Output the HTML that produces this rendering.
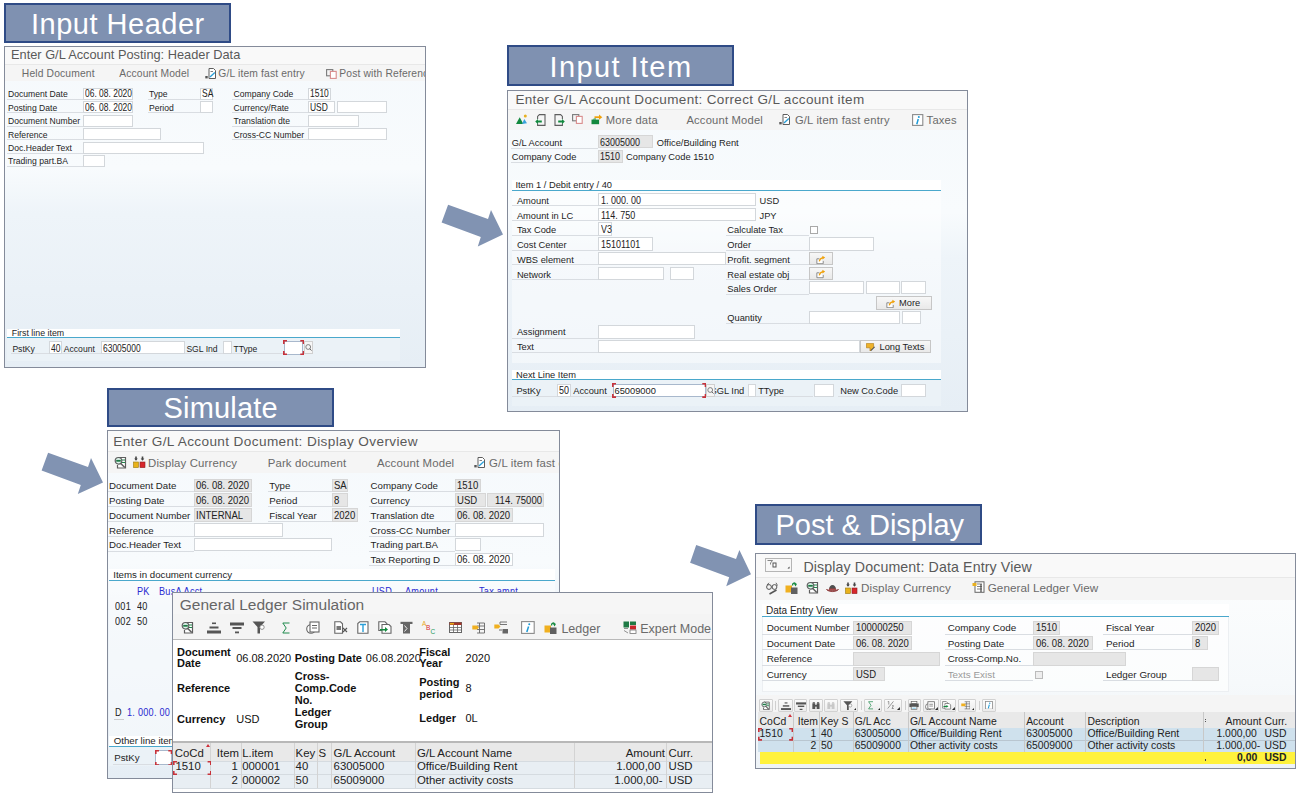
<!DOCTYPE html>
<html><head><meta charset="utf-8"><title>SAP G/L posting flow</title>
<style>
html,body{margin:0;padding:0;background:#fff}
#root{position:relative;width:1310px;height:799px;overflow:hidden;background:#fff;font-family:"Liberation Sans",sans-serif}
#root div{position:absolute;line-height:normal}
#root svg{position:absolute}
</style></head><body><div id="root">
<div style="left:4.0px;top:3.0px;width:227.0px;height:40.0px;background:#7f91b1;border:2px solid #2f4b86;box-sizing:border-box"></div>
<div style="left:31.0px;top:8.0px;font-size:29px;color:#fff;font-weight:400;font-family:'Liberation Sans';white-space:pre;letter-spacing:0.5px">Input Header</div>
<div style="left:507.0px;top:45.0px;width:227.0px;height:41.0px;background:#7f91b1;border:2px solid #2f4b86;box-sizing:border-box"></div>
<div style="left:549.5px;top:50.6px;font-size:29px;color:#fff;font-weight:400;font-family:'Liberation Sans';white-space:pre;letter-spacing:1.4px">Input Item</div>
<div style="left:107.0px;top:388.0px;width:227.0px;height:39.0px;background:#7f91b1;border:2px solid #2f4b86;box-sizing:border-box"></div>
<div style="left:163.5px;top:392.0px;font-size:29px;color:#fff;font-weight:400;font-family:'Liberation Sans';white-space:pre;letter-spacing:0.2px">Simulate</div>
<div style="left:755.0px;top:504.0px;width:227.0px;height:41.0px;background:#7f91b1;border:2px solid #2f4b86;box-sizing:border-box"></div>
<div style="left:775.5px;top:508.6px;font-size:29px;color:#fff;font-weight:400;font-family:'Liberation Sans';white-space:pre;letter-spacing:0px">Post &amp; Display</div>
<div style="left:4.0px;top:46.0px;width:422.0px;height:322.0px;overflow:hidden;border:1px solid #848b9a;box-sizing:border-box;background:linear-gradient(180deg,#f5f9fc 0%,#f8fbfd 38%,#eef4f9 52%,#e6eef5 100%)">
<div style="left:-1.0px;top:-1.0px;width:422.0px;height:19.0px;background:#f9f9f9;border-bottom:1px solid #e8e8e8;box-sizing:border-box"></div>
<div style="left:-1.0px;top:18.0px;width:422.0px;height:16.0px;background:#f5f5f5"></div>
<div style="left:6.0px;top:0.3px;font-size:12.8px;color:#595959;font-weight:400;font-family:'Liberation Sans';white-space:pre;">Enter G/L Account Posting: Header Data</div>
<div style="left:16.8px;top:21.3px;font-size:10.3px;color:#6a6a6a;font-weight:400;font-family:'Liberation Sans';white-space:pre;letter-spacing:0.15px">Held Document</div>
<div style="left:114.2px;top:21.3px;font-size:10.3px;color:#6a6a6a;font-weight:400;font-family:'Liberation Sans';white-space:pre;letter-spacing:0.15px">Account Model</div>
<div style="left:213.3px;top:21.3px;font-size:10.3px;color:#6a6a6a;font-weight:400;font-family:'Liberation Sans';white-space:pre;letter-spacing:0.15px">G/L item fast entry</div>
<div style="left:334.3px;top:21.3px;font-size:10.3px;color:#6a6a6a;font-weight:400;font-family:'Liberation Sans';white-space:pre;letter-spacing:0.15px">Post with Reference</div>
<div style="left:2.0px;top:52.0px;width:75.6px;height:1.0px;background:#d9dde2"></div>
<div style="left:3.0px;top:42.2px;font-size:8.6px;color:#1e1e1e;font-weight:400;font-family:'Liberation Sans';white-space:pre;">Document Date</div>
<div style="left:77.6px;top:41.0px;width:50.9px;height:12.0px;background:#fff;border:1px solid #d3d7db;box-sizing:border-box"></div>
<div style="left:79.5px;top:41.2px;font-size:10.2px;color:#222;font-weight:400;font-family:'Liberation Sans';white-space:pre;transform:scaleX(0.83);transform-origin:0 0">06. 08. 2020</div>
<div style="left:2.0px;top:65.4px;width:75.6px;height:1.0px;background:#d9dde2"></div>
<div style="left:3.0px;top:55.6px;font-size:8.6px;color:#1e1e1e;font-weight:400;font-family:'Liberation Sans';white-space:pre;">Posting Date</div>
<div style="left:77.6px;top:54.4px;width:50.9px;height:12.0px;background:#fff;border:1px solid #d3d7db;box-sizing:border-box"></div>
<div style="left:79.5px;top:54.6px;font-size:10.2px;color:#222;font-weight:400;font-family:'Liberation Sans';white-space:pre;transform:scaleX(0.83);transform-origin:0 0">06. 08. 2020</div>
<div style="left:2.0px;top:78.9px;width:75.6px;height:1.0px;background:#d9dde2"></div>
<div style="left:3.0px;top:69.1px;font-size:8.6px;color:#1e1e1e;font-weight:400;font-family:'Liberation Sans';white-space:pre;">Document Number</div>
<div style="left:77.6px;top:67.9px;width:50.9px;height:12.0px;background:#fff;border:1px solid #d3d7db;box-sizing:border-box"></div>
<div style="left:2.0px;top:92.3px;width:75.6px;height:1.0px;background:#d9dde2"></div>
<div style="left:3.0px;top:82.5px;font-size:8.6px;color:#1e1e1e;font-weight:400;font-family:'Liberation Sans';white-space:pre;">Reference</div>
<div style="left:77.6px;top:81.3px;width:78.6px;height:12.0px;background:#fff;border:1px solid #d3d7db;box-sizing:border-box"></div>
<div style="left:2.0px;top:105.7px;width:75.6px;height:1.0px;background:#d9dde2"></div>
<div style="left:3.0px;top:95.9px;font-size:8.6px;color:#1e1e1e;font-weight:400;font-family:'Liberation Sans';white-space:pre;">Doc.Header Text</div>
<div style="left:77.6px;top:94.7px;width:121.1px;height:12.0px;background:#fff;border:1px solid #d3d7db;box-sizing:border-box"></div>
<div style="left:2.0px;top:119.2px;width:75.6px;height:1.0px;background:#d9dde2"></div>
<div style="left:3.0px;top:109.3px;font-size:8.6px;color:#1e1e1e;font-weight:400;font-family:'Liberation Sans';white-space:pre;">Trading part.BA</div>
<div style="left:77.6px;top:108.2px;width:22.7px;height:12.0px;background:#fff;border:1px solid #d3d7db;box-sizing:border-box"></div>
<div style="left:143.0px;top:52.0px;width:52.0px;height:1.0px;background:#d9dde2"></div>
<div style="left:144.0px;top:42.2px;font-size:8.6px;color:#1e1e1e;font-weight:400;font-family:'Liberation Sans';white-space:pre;">Type</div>
<div style="left:195.0px;top:41.0px;width:13.3px;height:12.0px;background:#fff;border:1px solid #d3d7db;box-sizing:border-box"></div>
<div style="left:196.5px;top:41.2px;font-size:10.2px;color:#222;font-weight:400;font-family:'Liberation Sans';white-space:pre;transform:scaleX(0.83);transform-origin:0 0">SA</div>
<div style="left:143.0px;top:65.4px;width:52.0px;height:1.0px;background:#d9dde2"></div>
<div style="left:144.0px;top:55.6px;font-size:8.6px;color:#1e1e1e;font-weight:400;font-family:'Liberation Sans';white-space:pre;">Period</div>
<div style="left:195.0px;top:54.4px;width:13.3px;height:12.0px;background:#fff;border:1px solid #d3d7db;box-sizing:border-box"></div>
<div style="left:227.2px;top:52.0px;width:75.8px;height:1.0px;background:#d9dde2"></div>
<div style="left:228.5px;top:42.2px;font-size:8.6px;color:#1e1e1e;font-weight:400;font-family:'Liberation Sans';white-space:pre;">Company Code</div>
<div style="left:303.0px;top:41.0px;width:22.5px;height:12.0px;background:#fff;border:1px solid #d3d7db;box-sizing:border-box"></div>
<div style="left:304.5px;top:41.2px;font-size:10.2px;color:#222;font-weight:400;font-family:'Liberation Sans';white-space:pre;transform:scaleX(0.83);transform-origin:0 0">1510</div>
<div style="left:227.2px;top:65.4px;width:75.8px;height:1.0px;background:#d9dde2"></div>
<div style="left:228.5px;top:55.6px;font-size:8.6px;color:#1e1e1e;font-weight:400;font-family:'Liberation Sans';white-space:pre;">Currency/Rate</div>
<div style="left:303.0px;top:54.4px;width:27.2px;height:12.0px;background:#fff;border:1px solid #d3d7db;box-sizing:border-box"></div>
<div style="left:304.5px;top:54.6px;font-size:10.2px;color:#222;font-weight:400;font-family:'Liberation Sans';white-space:pre;transform:scaleX(0.83);transform-origin:0 0">USD</div>
<div style="left:227.2px;top:78.9px;width:75.8px;height:1.0px;background:#d9dde2"></div>
<div style="left:228.5px;top:69.1px;font-size:8.6px;color:#1e1e1e;font-weight:400;font-family:'Liberation Sans';white-space:pre;">Translation dte</div>
<div style="left:303.0px;top:67.9px;width:51.0px;height:12.0px;background:#fff;border:1px solid #d3d7db;box-sizing:border-box"></div>
<div style="left:227.2px;top:92.3px;width:75.8px;height:1.0px;background:#d9dde2"></div>
<div style="left:228.5px;top:82.5px;font-size:8.6px;color:#1e1e1e;font-weight:400;font-family:'Liberation Sans';white-space:pre;">Cross-CC Number</div>
<div style="left:303.0px;top:81.3px;width:79.2px;height:12.0px;background:#fff;border:1px solid #d3d7db;box-sizing:border-box"></div>
<div style="left:331.5px;top:54.4px;width:50.7px;height:12.0px;background:#fff;border:1px solid #d3d7db;box-sizing:border-box"></div>
<div style="left:2.4px;top:290.9px;width:393.0px;height:23.5px;background:rgba(235,242,247,0.9)"></div>
<div style="left:2.4px;top:281.8px;width:393.0px;height:9.1px;background:#fff"></div>
<div style="left:2.4px;top:290.4px;width:393.0px;height:1.0px;background:#4aa8cc"></div>
<div style="left:6.8px;top:281.2px;font-size:8.8px;color:#1e1e1e;font-weight:400;font-family:'Liberation Sans';white-space:pre;">First line item</div>
<div style="left:6.0px;top:306.0px;width:38.4px;height:1.0px;background:#d9dde2"></div>
<div style="left:7.4px;top:296.5px;font-size:8.6px;color:#1e1e1e;font-weight:400;font-family:'Liberation Sans';white-space:pre;">PstKy</div>
<div style="left:44.4px;top:294.2px;width:12.7px;height:12.8px;background:#fff;border:1px solid #d3d7db;box-sizing:border-box"></div>
<div style="left:46.0px;top:295.5px;font-size:10.2px;color:#222;font-weight:400;font-family:'Liberation Sans';white-space:pre;transform:scaleX(0.83);transform-origin:0 0">40</div>
<div style="left:57.1px;top:306.0px;width:39.3px;height:1.0px;background:#d9dde2"></div>
<div style="left:58.8px;top:296.5px;font-size:8.6px;color:#1e1e1e;font-weight:400;font-family:'Liberation Sans';white-space:pre;">Account</div>
<div style="left:96.4px;top:294.2px;width:83.3px;height:12.8px;background:#fff;border:1px solid #d3d7db;box-sizing:border-box"></div>
<div style="left:98.0px;top:295.5px;font-size:10.2px;color:#222;font-weight:400;font-family:'Liberation Sans';white-space:pre;transform:scaleX(0.83);transform-origin:0 0">63005000</div>
<div style="left:179.7px;top:306.0px;width:38.7px;height:1.0px;background:#d9dde2"></div>
<div style="left:181.4px;top:296.5px;font-size:8.6px;color:#1e1e1e;font-weight:400;font-family:'Liberation Sans';white-space:pre;">SGL Ind</div>
<div style="left:218.4px;top:294.2px;width:8.4px;height:12.8px;background:#fff;border:1px solid #d3d7db;box-sizing:border-box"></div>
<div style="left:226.8px;top:306.0px;width:52.0px;height:1.0px;background:#d9dde2"></div>
<div style="left:228.5px;top:296.5px;font-size:8.6px;color:#1e1e1e;font-weight:400;font-family:'Liberation Sans';white-space:pre;">TType</div>
<div style="left:278.8px;top:294.2px;width:19.5px;height:12.8px;background:#fff;border:1px solid #d3d7db;box-sizing:border-box"></div>
<svg style="position:absolute;left:199.6px;top:21.0px" width="12.0" height="11.0" viewBox="0 0 12 11"><path d="M4 0.5H8.5L10.5 2.5V10.5H4Z" fill="#fff" stroke="#5e5e5e" stroke-width="1"/><path d="M5.5 3.5h2.5" stroke="#5e5e5e" stroke-width="0.8"/><path d="M5 9 L9.8 4.5" stroke="#2a9fd8" stroke-width="1.3"/><rect x="0.3" y="8" width="2.4" height="2.4" fill="#555"/></svg>
<svg style="position:absolute;left:321.0px;top:22.0px" width="11.0" height="10.0" viewBox="0 0 11 10"><rect x="0.6" y="0.6" width="6.2" height="6.2" fill="none" stroke="#7a7a7a" stroke-width="1.1"/><rect x="4.4" y="2.4" width="5.8" height="7" fill="#fff" stroke="#d98c8c" stroke-width="1.1"/></svg>
<div style="left:278.8px;top:294.0px;width:19.7px;height:13.5px;border:1px solid #a8b8cc;background:#fff;box-sizing:border-box"></div>
<svg style="position:absolute;left:278.0px;top:293.1px" width="21.3" height="15.1" viewBox="0 0 21.30000000000001 15.099999999999966"><path d="M0.8 4 V0.8 H4 M17.30000000000001 0.8 H20.50000000000001 V4 M20.50000000000001 11.099999999999966 V14.299999999999965 H17.30000000000001 M4 14.299999999999965 H0.8 V11.099999999999966" fill="none" stroke="#c8323a" stroke-width="1.6"/></svg>
<svg style="position:absolute;left:298.8px;top:294.3px" width="9.0" height="13.0" viewBox="0 0 9 13"><rect x="0.5" y="0.5" width="8" height="12" fill="#f6f6f6" stroke="#d0d0d0" stroke-width="1"/><circle cx="4.2" cy="6" r="2.4" fill="none" stroke="#777" stroke-width="0.9"/><path d="M5.8 7.7 L7.5 9.6" stroke="#666" stroke-width="1"/></svg>
</div>
<div style="left:507.0px;top:90.0px;width:461.0px;height:322.0px;overflow:hidden;border:1px solid #848b9a;box-sizing:border-box;background:linear-gradient(180deg,#f5f9fc 0%,#f8fbfd 38%,#eef4f9 52%,#e6eef5 100%)">
<div style="left:-0.3px;top:-0.8px;width:460.0px;height:19.4px;background:#f9f9f9;border-bottom:1px solid #e8e8e8;box-sizing:border-box"></div>
<div style="left:-0.3px;top:18.6px;width:460.0px;height:20.2px;background:#f5f5f5"></div>
<div style="left:7.4px;top:1.1px;font-size:13.5px;color:#595959;font-weight:400;font-family:'Liberation Sans';white-space:pre;letter-spacing:0.34px">Enter G/L Account Document: Correct G/L account item</div>
<div style="left:97.8px;top:22.7px;font-size:11.2px;color:#6a6a6a;font-weight:400;font-family:'Liberation Sans';white-space:pre;letter-spacing:0.2px">More data</div>
<div style="left:178.4px;top:22.7px;font-size:11.2px;color:#6a6a6a;font-weight:400;font-family:'Liberation Sans';white-space:pre;letter-spacing:0.2px">Account Model</div>
<div style="left:286.9px;top:22.7px;font-size:11.2px;color:#6a6a6a;font-weight:400;font-family:'Liberation Sans';white-space:pre;letter-spacing:0.2px">G/L item fast entry</div>
<div style="left:418.6px;top:22.7px;font-size:11.2px;color:#6a6a6a;font-weight:400;font-family:'Liberation Sans';white-space:pre;letter-spacing:0.2px">Taxes</div>
<div style="left:3.0px;top:56.5px;width:87.0px;height:1.0px;background:#d9dde2"></div>
<div style="left:3.8px;top:46.5px;font-size:9.3px;color:#1e1e1e;font-weight:400;font-family:'Liberation Sans';white-space:pre;">G/L Account</div>
<div style="left:90.0px;top:44.3px;width:55.4px;height:13.2px;background:#e6e6e6;border:1px solid #d6d6d6;box-sizing:border-box"></div>
<div style="left:92.0px;top:45.5px;font-size:10.2px;color:#222;font-weight:400;font-family:'Liberation Sans';white-space:pre;transform:scaleX(0.88);transform-origin:0 0">63005000</div>
<div style="left:148.7px;top:46.5px;font-size:9.3px;color:#1e1e1e;font-weight:400;font-family:'Liberation Sans';white-space:pre;">Office/Building Rent</div>
<div style="left:3.0px;top:71.1px;width:87.0px;height:1.0px;background:#d9dde2"></div>
<div style="left:3.8px;top:61.3px;font-size:9.3px;color:#1e1e1e;font-weight:400;font-family:'Liberation Sans';white-space:pre;">Company Code</div>
<div style="left:90.0px;top:59.0px;width:25.2px;height:13.1px;background:#e6e6e6;border:1px solid #d6d6d6;box-sizing:border-box"></div>
<div style="left:92.0px;top:60.3px;font-size:10.2px;color:#222;font-weight:400;font-family:'Liberation Sans';white-space:pre;transform:scaleX(0.88);transform-origin:0 0">1510</div>
<div style="left:118.0px;top:61.3px;font-size:9.3px;color:#1e1e1e;font-weight:400;font-family:'Liberation Sans';white-space:pre;">Company Code 1510</div>
<div style="left:4.0px;top:89.0px;width:429.0px;height:10.0px;background:#fff"></div>
<div style="left:4.0px;top:100.0px;width:429.0px;height:171.5px;background:rgba(255,255,255,0.45)"></div>
<div style="left:4.0px;top:98.5px;width:429.0px;height:1.0px;background:#4aa8cc"></div>
<div style="left:7.4px;top:88.8px;font-size:9.3px;color:#1e1e1e;font-weight:400;font-family:'Liberation Sans';white-space:pre;">Item 1 / Debit entry / 40</div>
<div style="left:4.0px;top:114.4px;width:86.4px;height:1.0px;background:#d9dde2"></div>
<div style="left:8.9px;top:104.9px;font-size:9.3px;color:#1e1e1e;font-weight:400;font-family:'Liberation Sans';white-space:pre;">Amount</div>
<div style="left:90.4px;top:101.9px;width:157.9px;height:13.5px;background:#fff;border:1px solid #d3d7db;box-sizing:border-box"></div>
<div style="left:92.5px;top:103.9px;font-size:10.2px;color:#222;font-weight:400;font-family:'Liberation Sans';white-space:pre;transform:scaleX(0.88);transform-origin:0 0">1. 000. 00</div>
<div style="left:4.0px;top:129.1px;width:86.4px;height:1.0px;background:#d9dde2"></div>
<div style="left:8.9px;top:119.6px;font-size:9.3px;color:#1e1e1e;font-weight:400;font-family:'Liberation Sans';white-space:pre;">Amount in LC</div>
<div style="left:90.4px;top:116.6px;width:157.9px;height:13.5px;background:#fff;border:1px solid #d3d7db;box-sizing:border-box"></div>
<div style="left:92.5px;top:118.6px;font-size:10.2px;color:#222;font-weight:400;font-family:'Liberation Sans';white-space:pre;transform:scaleX(0.88);transform-origin:0 0">114. 750</div>
<div style="left:4.0px;top:143.9px;width:86.4px;height:1.0px;background:#d9dde2"></div>
<div style="left:8.9px;top:134.4px;font-size:9.3px;color:#1e1e1e;font-weight:400;font-family:'Liberation Sans';white-space:pre;">Tax Code</div>
<div style="left:90.4px;top:131.4px;width:13.8px;height:13.5px;background:#fff;border:1px solid #d3d7db;box-sizing:border-box"></div>
<div style="left:92.5px;top:133.4px;font-size:10.2px;color:#222;font-weight:400;font-family:'Liberation Sans';white-space:pre;transform:scaleX(0.88);transform-origin:0 0">V3</div>
<div style="left:4.0px;top:158.6px;width:86.4px;height:1.0px;background:#d9dde2"></div>
<div style="left:8.9px;top:149.1px;font-size:9.3px;color:#1e1e1e;font-weight:400;font-family:'Liberation Sans';white-space:pre;">Cost Center</div>
<div style="left:90.4px;top:146.1px;width:55.0px;height:13.5px;background:#fff;border:1px solid #d3d7db;box-sizing:border-box"></div>
<div style="left:92.5px;top:148.1px;font-size:10.2px;color:#222;font-weight:400;font-family:'Liberation Sans';white-space:pre;transform:scaleX(0.88);transform-origin:0 0">15101101</div>
<div style="left:4.0px;top:173.3px;width:86.4px;height:1.0px;background:#d9dde2"></div>
<div style="left:8.9px;top:163.8px;font-size:9.3px;color:#1e1e1e;font-weight:400;font-family:'Liberation Sans';white-space:pre;">WBS element</div>
<div style="left:90.4px;top:160.8px;width:127.3px;height:13.5px;background:#fff;border:1px solid #d3d7db;box-sizing:border-box"></div>
<div style="left:4.0px;top:188.1px;width:86.4px;height:1.0px;background:#d9dde2"></div>
<div style="left:8.9px;top:178.6px;font-size:9.3px;color:#1e1e1e;font-weight:400;font-family:'Liberation Sans';white-space:pre;">Network</div>
<div style="left:90.4px;top:175.6px;width:65.6px;height:13.5px;background:#fff;border:1px solid #d3d7db;box-sizing:border-box"></div>
<div style="left:162.4px;top:175.6px;width:23.9px;height:13.5px;background:#fff;border:1px solid #d3d7db;box-sizing:border-box"></div>
<div style="left:251.5px;top:104.9px;font-size:9.3px;color:#1e1e1e;font-weight:400;font-family:'Liberation Sans';white-space:pre;">USD</div>
<div style="left:251.5px;top:119.6px;font-size:9.3px;color:#1e1e1e;font-weight:400;font-family:'Liberation Sans';white-space:pre;">JPY</div>
<div style="left:217.7px;top:143.9px;width:83.0px;height:1.0px;background:#d9dde2"></div>
<div style="left:219.3px;top:134.4px;font-size:9.3px;color:#1e1e1e;font-weight:400;font-family:'Liberation Sans';white-space:pre;">Calculate Tax</div>
<div style="left:217.7px;top:158.6px;width:83.0px;height:1.0px;background:#d9dde2"></div>
<div style="left:219.3px;top:149.1px;font-size:9.3px;color:#1e1e1e;font-weight:400;font-family:'Liberation Sans';white-space:pre;">Order</div>
<div style="left:217.7px;top:173.3px;width:83.0px;height:1.0px;background:#d9dde2"></div>
<div style="left:219.3px;top:163.8px;font-size:9.3px;color:#1e1e1e;font-weight:400;font-family:'Liberation Sans';white-space:pre;">Profit. segment</div>
<div style="left:217.7px;top:188.1px;width:83.0px;height:1.0px;background:#d9dde2"></div>
<div style="left:219.3px;top:178.6px;font-size:9.3px;color:#1e1e1e;font-weight:400;font-family:'Liberation Sans';white-space:pre;">Real estate obj</div>
<div style="left:217.7px;top:202.8px;width:83.0px;height:1.0px;background:#d9dde2"></div>
<div style="left:219.3px;top:193.3px;font-size:9.3px;color:#1e1e1e;font-weight:400;font-family:'Liberation Sans';white-space:pre;">Sales Order</div>
<div style="left:302.3px;top:135.3px;width:7.6px;height:7.6px;border:1px solid #a9a9a9;background:#fff;box-sizing:border-box"></div>
<div style="left:300.7px;top:146.1px;width:65.5px;height:13.5px;background:#fff;border:1px solid #d3d7db;box-sizing:border-box"></div>
<div style="left:300.7px;top:160.8px;width:24.8px;height:13.7px;background:linear-gradient(#f7f7f7,#e9e9e9);border:1px solid #c6c6c6;box-sizing:border-box"></div>
<svg style="position:absolute;left:308.2px;top:163.6px" width="10.2" height="9.3" viewBox="0 0 12 11"><path d="M1 4.5 H4 M1 4.5 V10.3 H8.5 V7" fill="#fff" stroke="#7a7a7a" stroke-width="1"/><path d="M3.8 7.5 C4.5 4.5 6 3.5 8.5 3.2" stroke="#f0a10a" fill="none" stroke-width="1.5"/><path d="M7.5 0.8 L10.8 3 L7.6 5.3Z" fill="#f0a10a"/></svg>
<div style="left:300.7px;top:175.6px;width:24.8px;height:13.5px;background:linear-gradient(#f7f7f7,#e9e9e9);border:1px solid #c6c6c6;box-sizing:border-box"></div>
<svg style="position:absolute;left:308.2px;top:178.4px" width="10.2" height="9.3" viewBox="0 0 12 11"><path d="M1 4.5 H4 M1 4.5 V10.3 H8.5 V7" fill="#fff" stroke="#7a7a7a" stroke-width="1"/><path d="M3.8 7.5 C4.5 4.5 6 3.5 8.5 3.2" stroke="#f0a10a" fill="none" stroke-width="1.5"/><path d="M7.5 0.8 L10.8 3 L7.6 5.3Z" fill="#f0a10a"/></svg>
<div style="left:300.7px;top:190.3px;width:55.4px;height:13.0px;background:#fff;border:1px solid #d3d7db;box-sizing:border-box"></div>
<div style="left:357.6px;top:190.3px;width:34.4px;height:13.0px;background:#fff;border:1px solid #d3d7db;box-sizing:border-box"></div>
<div style="left:393.3px;top:190.3px;width:24.8px;height:13.0px;background:#fff;border:1px solid #d3d7db;box-sizing:border-box"></div>
<div style="left:367.5px;top:204.7px;width:56.0px;height:14.0px;background:linear-gradient(#f7f7f7,#e9e9e9);border:1px solid #c6c6c6;box-sizing:border-box"></div>
<svg style="position:absolute;left:377.5px;top:207.5px" width="10.2" height="9.3" viewBox="0 0 12 11"><path d="M1 4.5 H4 M1 4.5 V10.3 H8.5 V7" fill="#fff" stroke="#7a7a7a" stroke-width="1"/><path d="M3.8 7.5 C4.5 4.5 6 3.5 8.5 3.2" stroke="#f0a10a" fill="none" stroke-width="1.5"/><path d="M7.5 0.8 L10.8 3 L7.6 5.3Z" fill="#f0a10a"/></svg>
<div style="left:391.0px;top:207.0px;font-size:9.3px;color:#1e1e1e;font-weight:400;font-family:'Liberation Sans';white-space:pre;">More</div>
<div style="left:217.7px;top:232.0px;width:83.0px;height:1.0px;background:#d9dde2"></div>
<div style="left:219.3px;top:221.5px;font-size:9.3px;color:#1e1e1e;font-weight:400;font-family:'Liberation Sans';white-space:pre;">Quantity</div>
<div style="left:300.7px;top:219.6px;width:91.6px;height:13.4px;background:#fff;border:1px solid #d3d7db;box-sizing:border-box"></div>
<div style="left:393.7px;top:219.6px;width:19.3px;height:13.4px;background:#fff;border:1px solid #d3d7db;box-sizing:border-box"></div>
<div style="left:4.0px;top:246.6px;width:86.4px;height:1.0px;background:#d9dde2"></div>
<div style="left:8.9px;top:235.9px;font-size:9.3px;color:#1e1e1e;font-weight:400;font-family:'Liberation Sans';white-space:pre;">Assignment</div>
<div style="left:90.4px;top:234.4px;width:96.2px;height:13.2px;background:#fff;border:1px solid #d3d7db;box-sizing:border-box"></div>
<div style="left:4.0px;top:261.2px;width:86.4px;height:1.0px;background:#d9dde2"></div>
<div style="left:8.9px;top:250.5px;font-size:9.3px;color:#1e1e1e;font-weight:400;font-family:'Liberation Sans';white-space:pre;">Text</div>
<div style="left:90.4px;top:249.4px;width:261.5px;height:12.8px;background:#fff;border:1px solid #d3d7db;box-sizing:border-box"></div>
<div style="left:351.9px;top:248.6px;width:71.6px;height:13.8px;background:linear-gradient(#f7f7f7,#e9e9e9);border:1px solid #c6c6c6;box-sizing:border-box"></div>
<div style="left:371.5px;top:250.8px;font-size:9.3px;color:#1e1e1e;font-weight:400;font-family:'Liberation Sans';white-space:pre;">Long Texts</div>
<div style="left:4.0px;top:288.7px;width:429.0px;height:26.7px;background:rgba(235,242,247,0.9)"></div>
<div style="left:4.0px;top:279.2px;width:429.0px;height:9.5px;background:#fff"></div>
<div style="left:4.0px;top:288.2px;width:429.0px;height:1.0px;background:#4aa8cc"></div>
<div style="left:8.0px;top:278.6px;font-size:9.3px;color:#1e1e1e;font-weight:400;font-family:'Liberation Sans';white-space:pre;">Next Line Item</div>
<div style="left:4.0px;top:305.0px;width:44.9px;height:1.0px;background:#d9dde2"></div>
<div style="left:8.4px;top:294.8px;font-size:9.3px;color:#1e1e1e;font-weight:400;font-family:'Liberation Sans';white-space:pre;">PstKy</div>
<div style="left:48.9px;top:292.5px;width:14.4px;height:13.5px;background:#fff;border:1px solid #d3d7db;box-sizing:border-box"></div>
<div style="left:50.5px;top:293.8px;font-size:10.2px;color:#222;font-weight:400;font-family:'Liberation Sans';white-space:pre;transform:scaleX(0.88);transform-origin:0 0">50</div>
<div style="left:63.3px;top:305.0px;width:41.4px;height:1.0px;background:#d9dde2"></div>
<div style="left:65.2px;top:294.8px;font-size:9.3px;color:#1e1e1e;font-weight:400;font-family:'Liberation Sans';white-space:pre;">Account</div>
<div style="left:104.7px;top:292.5px;width:92.9px;height:13.5px;background:#fff;border:1px solid #d3d7db;box-sizing:border-box"></div>
<div style="left:106.5px;top:293.8px;font-size:10.2px;color:#222;font-weight:400;font-family:'Liberation Sans';white-space:pre;transform:scaleX(0.88);transform-origin:0 0">65009000</div>
<div style="left:197.6px;top:305.0px;width:42.1px;height:1.0px;background:#d9dde2"></div>
<div style="left:202.5px;top:294.8px;font-size:9.3px;color:#1e1e1e;font-weight:400;font-family:'Liberation Sans';white-space:pre;">SGL Ind</div>
<div style="left:239.7px;top:292.5px;width:8.6px;height:13.5px;background:#fff;border:1px solid #d3d7db;box-sizing:border-box"></div>
<div style="left:248.3px;top:305.0px;width:57.2px;height:1.0px;background:#d9dde2"></div>
<div style="left:250.2px;top:294.8px;font-size:9.3px;color:#1e1e1e;font-weight:400;font-family:'Liberation Sans';white-space:pre;">TType</div>
<div style="left:305.5px;top:292.5px;width:20.0px;height:13.5px;background:#fff;border:1px solid #d3d7db;box-sizing:border-box"></div>
<div style="left:330.0px;top:305.0px;width:63.3px;height:1.0px;background:#d9dde2"></div>
<div style="left:332.2px;top:294.8px;font-size:9.3px;color:#1e1e1e;font-weight:400;font-family:'Liberation Sans';white-space:pre;">New Co.Code</div>
<div style="left:393.3px;top:292.5px;width:24.8px;height:13.5px;background:#fff;border:1px solid #d3d7db;box-sizing:border-box"></div>
<svg style="position:absolute;left:7.5px;top:22.5px" width="12.0" height="11.0" viewBox="0 0 12 11"><path d="M0 10 L3.7 3.2 L7.4 10Z" fill="#13893e"/><path d="M6 10 L8.3 5 L11 9.3Z" fill="#3aa2dc"/><circle cx="9.3" cy="2" r="1.5" fill="#e8b020"/></svg>
<svg style="position:absolute;left:27.0px;top:22.5px" width="11.0" height="12.0" viewBox="0 0 11 12"><path d="M2.6 5 V2.4 L4.4 0.6 H10 V11.4 H2.6 V9.6" fill="none" stroke="#5e5e5e" stroke-width="1.1"/><path d="M0.2 7.6 L3 4.9 V6.6 H6.8 V8.6 H3 V10.3Z" fill="#13893e"/></svg>
<svg style="position:absolute;left:45.5px;top:22.5px" width="11.0" height="12.0" viewBox="0 0 11 12"><path d="M8.4 5 V2.4 L6.6 0.6 H1 V11.4 H8.4 V9.6" fill="none" stroke="#5e5e5e" stroke-width="1.1"/><path d="M10.8 7.6 L8 4.9 V6.6 H4.2 V8.6 H8 V10.3Z" fill="#13893e"/></svg>
<svg style="position:absolute;left:64.0px;top:22.8px" width="11.0" height="10.0" viewBox="0 0 11 10"><rect x="0.6" y="0.6" width="6.2" height="6.2" fill="none" stroke="#7a7a7a" stroke-width="1.1"/><rect x="4.4" y="2.4" width="5.8" height="7" fill="#fff" stroke="#d98c8c" stroke-width="1.1"/></svg>
<svg style="position:absolute;left:83.0px;top:23.0px" width="12.0" height="11.0" viewBox="0 0 12 11"><rect x="0.5" y="5.6" width="7.6" height="4.6" fill="#13893e"/><path d="M1.5 5.6 L3 4.6 H5 V5.6" fill="#13893e"/><path d="M3.5 3.2 H9" stroke="#f0a10a" stroke-width="1.8"/><path d="M8 0.6 L11.3 3.2 L8 5.8Z" fill="#f0a10a"/></svg>
<svg style="position:absolute;left:271.2px;top:23.0px" width="12.0" height="11.0" viewBox="0 0 12 11"><path d="M4 0.5H8.5L10.5 2.5V10.5H4Z" fill="#fff" stroke="#5e5e5e" stroke-width="1"/><path d="M5.5 3.5h2.5" stroke="#5e5e5e" stroke-width="0.8"/><path d="M5 9 L9.8 4.5" stroke="#2a9fd8" stroke-width="1.3"/><rect x="0.3" y="8" width="2.4" height="2.4" fill="#555"/></svg>
<svg style="position:absolute;left:404.3px;top:22.5px" width="11.4" height="12.0" viewBox="0 0 11.4 12"><rect x="0.6" y="0.6" width="10.200000000000001" height="10.8" fill="#fff" stroke="#8a8a8a" stroke-width="1.1"/><circle cx="6.84" cy="3.0" r="1" fill="#1e9ad6"/><path d="M6.2700000000000005 5.04 L4.788 10.2" stroke="#1e9ad6" stroke-width="1.5"/></svg>
<svg style="position:absolute;left:358.0px;top:251.5px" width="9.6" height="8.8" viewBox="0 0 12 11"><path d="M0.5 0.5 H9.5 V6 L5 10 V6 H0.5Z" fill="#eeb22a" stroke="#b07a10" stroke-width="0.8"/><path d="M6 9.5 L10.8 4.8" stroke="#555" stroke-width="1.3"/></svg>
<div style="left:104.7px;top:292.5px;width:92.9px;height:13.5px;border:1px solid #a8b8cc;background:#fff;box-sizing:border-box"></div>
<div style="left:106.5px;top:294.8px;font-size:9.3px;color:#222;font-weight:400;font-family:'Liberation Sans';white-space:pre;">65009000</div>
<svg style="position:absolute;left:104.0px;top:291.8px" width="94.3" height="14.9" viewBox="0 0 94.29999999999995 14.899999999999977"><path d="M0.8 4 V0.8 H4 M90.29999999999995 0.8 H93.49999999999996 V4 M93.49999999999996 10.899999999999977 V14.099999999999977 H90.29999999999995 M4 14.099999999999977 H0.8 V10.899999999999977" fill="none" stroke="#c8323a" stroke-width="1.6"/></svg>
<svg style="position:absolute;left:198.0px;top:292.8px" width="9.0" height="13.0" viewBox="0 0 9 13"><rect x="0.5" y="0.5" width="8" height="12" fill="#f6f6f6" stroke="#d0d0d0" stroke-width="1"/><circle cx="4.2" cy="6" r="2.4" fill="none" stroke="#777" stroke-width="0.9"/><path d="M5.8 7.7 L7.5 9.6" stroke="#666" stroke-width="1"/></svg>
</div>
<div style="left:107.0px;top:430.0px;width:453.0px;height:349.0px;overflow:hidden;border:1px solid #848b9a;box-sizing:border-box;background:linear-gradient(180deg,#f5f9fc 0%,#f8fbfd 38%,#eef4f9 52%,#e6eef5 100%)">
<div style="left:-0.3px;top:-0.8px;width:451.7px;height:21.3px;background:#f9f9f9;border-bottom:1px solid #e8e8e8;box-sizing:border-box"></div>
<div style="left:-0.3px;top:20.5px;width:451.7px;height:21.4px;background:#f5f5f5"></div>
<div style="left:5.2px;top:2.8px;font-size:13.6px;color:#595959;font-weight:400;font-family:'Liberation Sans';white-space:pre;letter-spacing:0.38px">Enter G/L Account Document: Display Overview</div>
<div style="left:40.0px;top:25.5px;font-size:11.4px;color:#6a6a6a;font-weight:400;font-family:'Liberation Sans';white-space:pre;letter-spacing:0.15px">Display Currency</div>
<div style="left:159.7px;top:25.5px;font-size:11.4px;color:#6a6a6a;font-weight:400;font-family:'Liberation Sans';white-space:pre;letter-spacing:0.15px">Park document</div>
<div style="left:269.0px;top:25.5px;font-size:11.4px;color:#6a6a6a;font-weight:400;font-family:'Liberation Sans';white-space:pre;letter-spacing:0.15px">Account Model</div>
<div style="left:381.1px;top:25.5px;font-size:11.4px;color:#6a6a6a;font-weight:400;font-family:'Liberation Sans';white-space:pre;letter-spacing:0.15px">G/L item fast entry</div>
<div style="left:0.0px;top:59.9px;width:85.5px;height:1.0px;background:#d9dde2"></div>
<div style="left:1.0px;top:48.8px;font-size:9.7px;color:#1e1e1e;font-weight:400;font-family:'Liberation Sans';white-space:pre;">Document Date</div>
<div style="left:85.5px;top:47.5px;width:58.1px;height:13.4px;background:#e6e6e6;border:1px solid #d6d6d6;box-sizing:border-box"></div>
<div style="left:87.5px;top:47.8px;font-size:10.6px;color:#222;font-weight:400;font-family:'Liberation Sans';white-space:pre;transform:scaleX(0.9);transform-origin:0 0">06. 08. 2020</div>
<div style="left:0.0px;top:74.8px;width:85.5px;height:1.0px;background:#d9dde2"></div>
<div style="left:1.0px;top:63.7px;font-size:9.7px;color:#1e1e1e;font-weight:400;font-family:'Liberation Sans';white-space:pre;">Posting Date</div>
<div style="left:85.5px;top:62.4px;width:58.1px;height:13.4px;background:#e6e6e6;border:1px solid #d6d6d6;box-sizing:border-box"></div>
<div style="left:87.5px;top:62.7px;font-size:10.6px;color:#222;font-weight:400;font-family:'Liberation Sans';white-space:pre;transform:scaleX(0.9);transform-origin:0 0">06. 08. 2020</div>
<div style="left:0.0px;top:89.7px;width:85.5px;height:1.0px;background:#d9dde2"></div>
<div style="left:1.0px;top:78.6px;font-size:9.7px;color:#1e1e1e;font-weight:400;font-family:'Liberation Sans';white-space:pre;">Document Number</div>
<div style="left:85.5px;top:77.3px;width:58.1px;height:13.4px;background:#e6e6e6;border:1px solid #d6d6d6;box-sizing:border-box"></div>
<div style="left:87.5px;top:77.6px;font-size:10.6px;color:#222;font-weight:400;font-family:'Liberation Sans';white-space:pre;transform:scaleX(0.9);transform-origin:0 0">INTERNAL</div>
<div style="left:0.0px;top:104.6px;width:85.5px;height:1.0px;background:#d9dde2"></div>
<div style="left:1.0px;top:93.5px;font-size:9.7px;color:#1e1e1e;font-weight:400;font-family:'Liberation Sans';white-space:pre;">Reference</div>
<div style="left:85.5px;top:92.2px;width:89.6px;height:13.4px;background:#fff;border:1px solid #d3d7db;box-sizing:border-box"></div>
<div style="left:0.0px;top:119.5px;width:85.5px;height:1.0px;background:#d9dde2"></div>
<div style="left:1.0px;top:108.4px;font-size:9.7px;color:#1e1e1e;font-weight:400;font-family:'Liberation Sans';white-space:pre;">Doc.Header Text</div>
<div style="left:85.5px;top:107.1px;width:138.1px;height:13.4px;background:#fff;border:1px solid #d3d7db;box-sizing:border-box"></div>
<div style="left:160.0px;top:59.9px;width:64.3px;height:1.0px;background:#d9dde2"></div>
<div style="left:161.3px;top:48.8px;font-size:9.7px;color:#1e1e1e;font-weight:400;font-family:'Liberation Sans';white-space:pre;">Type</div>
<div style="left:224.3px;top:47.5px;width:15.4px;height:13.4px;background:#e6e6e6;border:1px solid #d6d6d6;box-sizing:border-box"></div>
<div style="left:226.0px;top:47.8px;font-size:10.6px;color:#222;font-weight:400;font-family:'Liberation Sans';white-space:pre;transform:scaleX(0.9);transform-origin:0 0">SA</div>
<div style="left:160.0px;top:74.8px;width:64.3px;height:1.0px;background:#d9dde2"></div>
<div style="left:161.3px;top:63.7px;font-size:9.7px;color:#1e1e1e;font-weight:400;font-family:'Liberation Sans';white-space:pre;">Period</div>
<div style="left:224.3px;top:62.4px;width:15.4px;height:13.4px;background:#e6e6e6;border:1px solid #d6d6d6;box-sizing:border-box"></div>
<div style="left:226.0px;top:62.7px;font-size:10.6px;color:#222;font-weight:400;font-family:'Liberation Sans';white-space:pre;transform:scaleX(0.9);transform-origin:0 0">8</div>
<div style="left:160.0px;top:89.7px;width:64.3px;height:1.0px;background:#d9dde2"></div>
<div style="left:161.3px;top:78.6px;font-size:9.7px;color:#1e1e1e;font-weight:400;font-family:'Liberation Sans';white-space:pre;">Fiscal Year</div>
<div style="left:224.3px;top:77.3px;width:26.0px;height:13.4px;background:#e6e6e6;border:1px solid #d6d6d6;box-sizing:border-box"></div>
<div style="left:226.0px;top:77.6px;font-size:10.6px;color:#222;font-weight:400;font-family:'Liberation Sans';white-space:pre;transform:scaleX(0.9);transform-origin:0 0">2020</div>
<div style="left:261.0px;top:59.9px;width:86.1px;height:1.0px;background:#d9dde2"></div>
<div style="left:262.6px;top:48.8px;font-size:9.7px;color:#1e1e1e;font-weight:400;font-family:'Liberation Sans';white-space:pre;">Company Code</div>
<div style="left:347.1px;top:47.5px;width:25.5px;height:13.4px;background:#e6e6e6;border:1px solid #d6d6d6;box-sizing:border-box"></div>
<div style="left:349.0px;top:47.8px;font-size:10.6px;color:#222;font-weight:400;font-family:'Liberation Sans';white-space:pre;transform:scaleX(0.9);transform-origin:0 0">1510</div>
<div style="left:261.0px;top:74.8px;width:86.1px;height:1.0px;background:#d9dde2"></div>
<div style="left:262.6px;top:63.7px;font-size:9.7px;color:#1e1e1e;font-weight:400;font-family:'Liberation Sans';white-space:pre;">Currency</div>
<div style="left:347.1px;top:62.4px;width:30.9px;height:13.4px;background:#e6e6e6;border:1px solid #d6d6d6;box-sizing:border-box"></div>
<div style="left:349.0px;top:62.7px;font-size:10.6px;color:#222;font-weight:400;font-family:'Liberation Sans';white-space:pre;transform:scaleX(0.9);transform-origin:0 0">USD</div>
<div style="left:261.0px;top:89.7px;width:86.1px;height:1.0px;background:#d9dde2"></div>
<div style="left:262.6px;top:78.6px;font-size:9.7px;color:#1e1e1e;font-weight:400;font-family:'Liberation Sans';white-space:pre;">Translation dte</div>
<div style="left:347.1px;top:77.3px;width:57.5px;height:13.4px;background:#e6e6e6;border:1px solid #d6d6d6;box-sizing:border-box"></div>
<div style="left:349.0px;top:77.6px;font-size:10.6px;color:#222;font-weight:400;font-family:'Liberation Sans';white-space:pre;transform:scaleX(0.9);transform-origin:0 0">06. 08. 2020</div>
<div style="left:261.0px;top:104.6px;width:86.1px;height:1.0px;background:#d9dde2"></div>
<div style="left:262.6px;top:93.5px;font-size:9.7px;color:#1e1e1e;font-weight:400;font-family:'Liberation Sans';white-space:pre;">Cross-CC Number</div>
<div style="left:347.1px;top:92.2px;width:89.4px;height:13.4px;background:#fff;border:1px solid #d3d7db;box-sizing:border-box"></div>
<div style="left:261.0px;top:119.5px;width:86.1px;height:1.0px;background:#d9dde2"></div>
<div style="left:262.6px;top:108.4px;font-size:9.7px;color:#1e1e1e;font-weight:400;font-family:'Liberation Sans';white-space:pre;">Trading part.BA</div>
<div style="left:347.1px;top:107.1px;width:25.5px;height:13.4px;background:#fff;border:1px solid #d3d7db;box-sizing:border-box"></div>
<div style="left:261.0px;top:134.4px;width:86.1px;height:1.0px;background:#d9dde2"></div>
<div style="left:262.6px;top:123.3px;font-size:9.7px;color:#1e1e1e;font-weight:400;font-family:'Liberation Sans';white-space:pre;">Tax Reporting D</div>
<div style="left:347.1px;top:122.0px;width:57.5px;height:13.4px;background:#fff;border:1px solid #d3d7db;box-sizing:border-box"></div>
<div style="left:349.0px;top:122.3px;font-size:10.6px;color:#222;font-weight:400;font-family:'Liberation Sans';white-space:pre;transform:scaleX(0.9);transform-origin:0 0">06. 08. 2020</div>
<div style="left:379.4px;top:62.4px;width:57.1px;height:13.4px;background:#e6e6e6;border:1px solid #d6d6d6;box-sizing:border-box"></div>
<div style="left:133.5px;width:300px;text-align:right;top:62.7px;font-size:10.6px;color:#222;font-weight:400;font-family:'Liberation Sans';white-space:pre;transform:scaleX(0.9);transform-origin:100% 0">114. 75000</div>
<div style="left:1.0px;top:149.5px;width:446.1px;height:155.8px;background:rgba(255,255,255,0.45)"></div>
<div style="left:1.0px;top:137.6px;width:446.1px;height:11.9px;background:#fff"></div>
<div style="left:1.0px;top:149.0px;width:446.1px;height:1.0px;background:#4aa8cc"></div>
<div style="left:5.2px;top:138.1px;font-size:9.7px;color:#1e1e1e;font-weight:400;font-family:'Liberation Sans';white-space:pre;">Items in document currency</div>
<div style="left:28.8px;top:153.5px;font-size:10.6px;color:#2a2ad0;font-weight:400;font-family:'Liberation Sans';white-space:pre;transform:scaleX(0.86);transform-origin:0 0;letter-spacing:0.3px">PK</div>
<div style="left:50.5px;top:153.5px;font-size:10.6px;color:#2a2ad0;font-weight:400;font-family:'Liberation Sans';white-space:pre;transform:scaleX(0.86);transform-origin:0 0;letter-spacing:0.3px">BusA Acct</div>
<div style="left:263.7px;top:153.5px;font-size:10.6px;color:#2a2ad0;font-weight:400;font-family:'Liberation Sans';white-space:pre;transform:scaleX(0.86);transform-origin:0 0;letter-spacing:0.3px">USD</div>
<div style="left:296.5px;top:153.5px;font-size:10.6px;color:#2a2ad0;font-weight:400;font-family:'Liberation Sans';white-space:pre;transform:scaleX(0.86);transform-origin:0 0;letter-spacing:0.3px">Amount</div>
<div style="left:371.1px;top:153.5px;font-size:10.6px;color:#2a2ad0;font-weight:400;font-family:'Liberation Sans';white-space:pre;transform:scaleX(0.86);transform-origin:0 0;letter-spacing:0.3px">Tax amnt</div>
<div style="left:7.3px;top:169.0px;font-size:10.6px;color:#222;font-weight:400;font-family:'Liberation Sans';white-space:pre;transform:scaleX(0.86);transform-origin:0 0;letter-spacing:0.3px">001</div>
<div style="left:28.8px;top:169.0px;font-size:10.6px;color:#222;font-weight:400;font-family:'Liberation Sans';white-space:pre;transform:scaleX(0.86);transform-origin:0 0;letter-spacing:0.3px">40</div>
<div style="left:7.3px;top:183.9px;font-size:10.6px;color:#222;font-weight:400;font-family:'Liberation Sans';white-space:pre;transform:scaleX(0.86);transform-origin:0 0;letter-spacing:0.3px">002</div>
<div style="left:28.8px;top:183.9px;font-size:10.6px;color:#222;font-weight:400;font-family:'Liberation Sans';white-space:pre;transform:scaleX(0.86);transform-origin:0 0;letter-spacing:0.3px">50</div>
<div style="left:6.5px;top:275.0px;font-size:10.6px;color:#222;font-weight:400;font-family:'Liberation Sans';white-space:pre;transform:scaleX(0.86);transform-origin:0 0;letter-spacing:0.3px">D</div>
<div style="left:18.5px;top:275.0px;font-size:10.6px;color:#2a2ad0;font-weight:400;font-family:'Liberation Sans';white-space:pre;transform:scaleX(0.86);transform-origin:0 0;letter-spacing:0.3px">1. 000. 00</div>
<div style="left:6.0px;top:287.5px;width:10.0px;height:1.0px;background:#ccc"></div>
<div style="left:1.0px;top:315.4px;width:446.1px;height:19.6px;background:rgba(235,242,247,0.9)"></div>
<div style="left:1.0px;top:305.3px;width:446.1px;height:10.1px;background:#fff"></div>
<div style="left:1.0px;top:314.9px;width:446.1px;height:1.0px;background:#4aa8cc"></div>
<div style="left:5.7px;top:304.3px;font-size:9.7px;color:#1e1e1e;font-weight:400;font-family:'Liberation Sans';white-space:pre;">Other line item</div>
<div style="left:5.0px;top:332.9px;width:42.3px;height:1.0px;background:#d9dde2"></div>
<div style="left:6.3px;top:321.0px;font-size:9.7px;color:#1e1e1e;font-weight:400;font-family:'Liberation Sans';white-space:pre;">PstKy</div>
<div style="left:47.3px;top:319.0px;width:16.3px;height:14.9px;background:#fff;border:1px solid #d3d7db;box-sizing:border-box"></div>
<svg style="position:absolute;left:6.0px;top:24.5px" width="13.0" height="13.0" viewBox="0 0 13 13"><g transform="scale(1.0)"><path d="M4 1.5H11.5V12H3.5V9" fill="#fff" stroke="#5e5e5e" stroke-width="1.2"/><path d="M8 4h3M8 6.5h3" stroke="#1f8a4c" stroke-width="1.2"/><circle cx="4.5" cy="4.8" r="3.3" fill="#dff5ec" stroke="#5e5e5e" stroke-width="1.2"/><path d="M2.2 4.8h4.6" stroke="#1f7a45" stroke-width="1.8"/><path d="M6.5 7.2 L10.8 11.6" stroke="#5e5e5e" stroke-width="1.5"/></g></svg>
<svg style="position:absolute;left:24.5px;top:24.5px" width="13.0" height="12.0" viewBox="0 0 13 12"><path d="M3 0.5v3" stroke="#444" stroke-width="1.6"/><path d="M1.2 2.5 L3 4.8 L4.8 2.5Z" fill="#444"/><path d="M9.5 0.5v3" stroke="#444" stroke-width="1.6"/><path d="M7.7 2.5 L9.5 4.8 L11.3 2.5Z" fill="#444"/><rect x="0.5" y="6" width="5" height="5.6" fill="#e9b21b" stroke="#9a7a10" stroke-width="0.6"/><rect x="7" y="6" width="5" height="5.6" fill="#d8262b" stroke="#8a2020" stroke-width="0.6"/></svg>
<svg style="position:absolute;left:365.6px;top:26.0px" width="12.0" height="11.0" viewBox="0 0 12 11"><path d="M4 0.5H8.5L10.5 2.5V10.5H4Z" fill="#fff" stroke="#5e5e5e" stroke-width="1"/><path d="M5.5 3.5h2.5" stroke="#5e5e5e" stroke-width="0.8"/><path d="M5 9 L9.8 4.5" stroke="#2a9fd8" stroke-width="1.3"/><rect x="0.3" y="8" width="2.4" height="2.4" fill="#555"/></svg>
<div style="left:47.3px;top:319.0px;width:16.3px;height:14.9px;border:1px solid #a8b8cc;background:#fff;box-sizing:border-box"></div>
<svg style="position:absolute;left:46.8px;top:318.5px" width="17.3" height="15.9" viewBox="0 0 17.299999999999983 15.899999999999977"><path d="M0.8 4 V0.8 H4 M13.299999999999983 0.8 H16.499999999999982 V4 M16.499999999999982 11.899999999999977 V15.099999999999977 H13.299999999999983 M4 15.099999999999977 H0.8 V11.899999999999977" fill="none" stroke="#c8323a" stroke-width="1.6"/></svg>
</div>
<div style="left:172.0px;top:592.0px;width:541.0px;height:201.0px;overflow:hidden;border:1px solid #848b9a;box-sizing:border-box;background:#fff">
<div style="left:-0.7px;top:-0.7px;width:540.1px;height:21.7px;background:#f6f6f6"></div>
<div style="left:-0.7px;top:21.0px;width:540.1px;height:26.4px;background:#f4f4f4;border-bottom:1.5px solid #b9b9b9;box-sizing:border-box"></div>
<div style="left:6.8px;top:3.0px;font-size:15.5px;color:#666;font-weight:400;font-family:'Liberation Sans';white-space:pre;">General Ledger Simulation</div>
<div style="left:388.4px;top:28.8px;font-size:12.5px;color:#6a6a6a;font-weight:400;font-family:'Liberation Sans';white-space:pre;">Ledger</div>
<div style="left:467.2px;top:28.8px;font-size:12.5px;color:#6a6a6a;font-weight:400;font-family:'Liberation Sans';white-space:pre;">Expert Mode</div>
<div style="left:4.0px;top:52.7px;font-size:11px;color:#111;font-weight:700;font-family:'Liberation Sans';white-space:pre;">Document</div>
<div style="left:4.0px;top:64.4px;font-size:11px;color:#111;font-weight:700;font-family:'Liberation Sans';white-space:pre;">Date</div>
<div style="left:63.2px;top:58.7px;font-size:11px;color:#111;font-weight:400;font-family:'Liberation Sans';white-space:pre;">06.08.2020</div>
<div style="left:121.7px;top:58.7px;font-size:11px;color:#111;font-weight:700;font-family:'Liberation Sans';white-space:pre;">Posting Date</div>
<div style="left:192.8px;top:58.7px;font-size:11px;color:#111;font-weight:400;font-family:'Liberation Sans';white-space:pre;">06.08.2020</div>
<div style="left:246.2px;top:52.8px;font-size:11px;color:#111;font-weight:700;font-family:'Liberation Sans';white-space:pre;">Fiscal</div>
<div style="left:246.2px;top:64.3px;font-size:11px;color:#111;font-weight:700;font-family:'Liberation Sans';white-space:pre;">Year</div>
<div style="left:292.6px;top:58.6px;font-size:11px;color:#111;font-weight:400;font-family:'Liberation Sans';white-space:pre;">2020</div>
<div style="left:4.0px;top:88.9px;font-size:11px;color:#111;font-weight:700;font-family:'Liberation Sans';white-space:pre;">Reference</div>
<div style="left:121.7px;top:77.2px;font-size:11px;color:#111;font-weight:700;font-family:'Liberation Sans';white-space:pre;">Cross-</div>
<div style="left:121.7px;top:89.0px;font-size:11px;color:#111;font-weight:700;font-family:'Liberation Sans';white-space:pre;">Comp.Code</div>
<div style="left:121.7px;top:101.0px;font-size:11px;color:#111;font-weight:700;font-family:'Liberation Sans';white-space:pre;">No.</div>
<div style="left:246.2px;top:83.4px;font-size:11px;color:#111;font-weight:700;font-family:'Liberation Sans';white-space:pre;">Posting</div>
<div style="left:246.2px;top:94.8px;font-size:11px;color:#111;font-weight:700;font-family:'Liberation Sans';white-space:pre;">period</div>
<div style="left:292.6px;top:89.1px;font-size:11px;color:#111;font-weight:400;font-family:'Liberation Sans';white-space:pre;">8</div>
<div style="left:4.0px;top:119.8px;font-size:11px;color:#111;font-weight:700;font-family:'Liberation Sans';white-space:pre;">Currency</div>
<div style="left:63.2px;top:119.8px;font-size:11px;color:#111;font-weight:400;font-family:'Liberation Sans';white-space:pre;">USD</div>
<div style="left:121.7px;top:113.4px;font-size:11px;color:#111;font-weight:700;font-family:'Liberation Sans';white-space:pre;">Ledger</div>
<div style="left:121.7px;top:125.1px;font-size:11px;color:#111;font-weight:700;font-family:'Liberation Sans';white-space:pre;">Group</div>
<div style="left:246.3px;top:119.3px;font-size:11px;color:#111;font-weight:700;font-family:'Liberation Sans';white-space:pre;">Ledger</div>
<div style="left:292.5px;top:119.3px;font-size:11px;color:#111;font-weight:400;font-family:'Liberation Sans';white-space:pre;">0L</div>
<div style="left:-0.7px;top:148.1px;width:540.1px;height:2.1px;background:#b8b8b8"></div>
<div style="left:-0.7px;top:150.2px;width:540.1px;height:17.8px;background:#e9e9e9"></div>
<div style="left:-0.7px;top:168.0px;width:540.1px;height:26.8px;background:#e8eef3"></div>
<div style="left:-0.7px;top:181.4px;width:540.1px;height:0.8px;background:#d5dbe0"></div>
<div style="left:-0.7px;top:168.0px;width:540.1px;height:0.8px;background:#d5dbe0"></div>
<div style="left:-0.7px;top:194.8px;width:540.1px;height:0.8px;background:#d5dbe0"></div>
<div style="left:37.3px;top:150.2px;width:0.8px;height:44.6px;background:#d3d3d3"></div>
<div style="left:67.8px;top:150.2px;width:0.8px;height:44.6px;background:#d3d3d3"></div>
<div style="left:120.7px;top:150.2px;width:0.8px;height:44.6px;background:#d3d3d3"></div>
<div style="left:143.6px;top:150.2px;width:0.8px;height:44.6px;background:#d3d3d3"></div>
<div style="left:158.3px;top:150.2px;width:0.8px;height:44.6px;background:#d3d3d3"></div>
<div style="left:241.8px;top:150.2px;width:0.8px;height:44.6px;background:#d3d3d3"></div>
<div style="left:401.1px;top:150.2px;width:0.8px;height:44.6px;background:#d3d3d3"></div>
<div style="left:493.4px;top:150.2px;width:0.8px;height:44.6px;background:#d3d3d3"></div>
<div style="left:1.8px;top:153.5px;font-size:11.4px;color:#222;font-weight:400;font-family:'Liberation Sans';white-space:pre;">CoCd</div>
<div style="left:69.2px;top:153.5px;font-size:11.4px;color:#222;font-weight:400;font-family:'Liberation Sans';white-space:pre;">L.item</div>
<div style="left:122.6px;top:153.5px;font-size:11.4px;color:#222;font-weight:400;font-family:'Liberation Sans';white-space:pre;">Key</div>
<div style="left:145.5px;top:153.5px;font-size:11.4px;color:#222;font-weight:400;font-family:'Liberation Sans';white-space:pre;">S</div>
<div style="left:160.6px;top:153.5px;font-size:11.4px;color:#222;font-weight:400;font-family:'Liberation Sans';white-space:pre;">G/L Account</div>
<div style="left:243.9px;top:153.5px;font-size:11.4px;color:#222;font-weight:400;font-family:'Liberation Sans';white-space:pre;">G/L Account Name</div>
<div style="left:495.5px;top:153.5px;font-size:11.4px;color:#222;font-weight:400;font-family:'Liberation Sans';white-space:pre;">Curr.</div>
<div style="left:-234.0px;width:300px;text-align:right;top:153.5px;font-size:11.4px;color:#222;font-weight:400;font-family:'Liberation Sans';white-space:pre;">Item</div>
<div style="left:192.0px;width:300px;text-align:right;top:153.5px;font-size:11.4px;color:#222;font-weight:400;font-family:'Liberation Sans';white-space:pre;">Amount</div>
<div style="left:-235.2px;width:300px;text-align:right;top:166.7px;font-size:11.4px;color:#222;font-weight:400;font-family:'Liberation Sans';white-space:pre;">1</div>
<div style="left:69.2px;top:166.7px;font-size:11.4px;color:#222;font-weight:400;font-family:'Liberation Sans';white-space:pre;">000001</div>
<div style="left:122.6px;top:166.7px;font-size:11.4px;color:#222;font-weight:400;font-family:'Liberation Sans';white-space:pre;">40</div>
<div style="left:160.6px;top:166.7px;font-size:11.4px;color:#222;font-weight:400;font-family:'Liberation Sans';white-space:pre;">63005000</div>
<div style="left:243.9px;top:166.7px;font-size:11.4px;color:#222;font-weight:400;font-family:'Liberation Sans';white-space:pre;">Office/Building Rent</div>
<div style="left:187.5px;width:300px;text-align:right;top:166.7px;font-size:11.4px;color:#222;font-weight:400;font-family:'Liberation Sans';white-space:pre;">1.000,00</div>
<div style="left:495.5px;top:166.7px;font-size:11.4px;color:#222;font-weight:400;font-family:'Liberation Sans';white-space:pre;">USD</div>
<div style="left:2.4px;top:166.7px;font-size:11.4px;color:#222;font-weight:400;font-family:'Liberation Sans';white-space:pre;">1510</div>
<div style="left:-235.2px;width:300px;text-align:right;top:181.0px;font-size:11.4px;color:#222;font-weight:400;font-family:'Liberation Sans';white-space:pre;">2</div>
<div style="left:69.2px;top:181.0px;font-size:11.4px;color:#222;font-weight:400;font-family:'Liberation Sans';white-space:pre;">000002</div>
<div style="left:122.6px;top:181.0px;font-size:11.4px;color:#222;font-weight:400;font-family:'Liberation Sans';white-space:pre;">50</div>
<div style="left:160.6px;top:181.0px;font-size:11.4px;color:#222;font-weight:400;font-family:'Liberation Sans';white-space:pre;">65009000</div>
<div style="left:243.9px;top:181.0px;font-size:11.4px;color:#222;font-weight:400;font-family:'Liberation Sans';white-space:pre;">Other activity costs</div>
<div style="left:189.5px;width:300px;text-align:right;top:181.0px;font-size:11.4px;color:#222;font-weight:400;font-family:'Liberation Sans';white-space:pre;">1.000,00-</div>
<div style="left:495.5px;top:181.0px;font-size:11.4px;color:#222;font-weight:400;font-family:'Liberation Sans';white-space:pre;">USD</div>
<svg style="position:absolute;left:8.0px;top:27.9px" width="13.0" height="13.0" viewBox="0 0 13 13"><g transform="scale(1.0)"><path d="M4 1.5H11.5V12H3.5V9" fill="#fff" stroke="#5e5e5e" stroke-width="1.2"/><path d="M8 4h3M8 6.5h3" stroke="#1f8a4c" stroke-width="1.2"/><circle cx="4.5" cy="4.8" r="3.3" fill="#dff5ec" stroke="#5e5e5e" stroke-width="1.2"/><path d="M2.2 4.8h4.6" stroke="#1f7a45" stroke-width="1.8"/><path d="M6.5 7.2 L10.8 11.6" stroke="#5e5e5e" stroke-width="1.5"/></g></svg>
<svg style="position:absolute;left:34.1px;top:28.6px" width="14.0" height="12.0" viewBox="0 0 14 12"><rect x="5" y="0.5" width="4" height="1.6" fill="#555"/><rect x="2.5" y="4.5" width="9" height="2" fill="#555"/><rect x="0" y="8.5" width="14" height="3" fill="#555"/></svg>
<svg style="position:absolute;left:57.0px;top:28.6px" width="14.0" height="12.0" viewBox="0 0 14 12"><rect x="0" y="0.5" width="14" height="3" fill="#555"/><rect x="2.5" y="5" width="9" height="2" fill="#555"/><rect x="5" y="9.5" width="4" height="1.8" fill="#555"/></svg>
<svg style="position:absolute;left:79.2px;top:27.9px" width="14.0" height="13.0" viewBox="0 0 14 13"><path d="M0.5 0.5 H13 L8 6 V12.5 H5.5 V6Z" fill="#555"/><circle cx="10" cy="6.2" r="2.2" fill="#fff" stroke="#777" stroke-width="0.8"/></svg>
<svg style="position:absolute;left:108.9px;top:28.5px" width="8.0" height="12.0" viewBox="0 0 8 12"><path d="M7.5 1 H0.8 L4.2 6 L0.8 11 H7.5" fill="none" stroke="#1f8a4c" stroke-width="1"/></svg>
<svg style="position:absolute;left:132.6px;top:27.9px" width="14.0" height="13.0" viewBox="0 0 14 13"><circle cx="5" cy="8" r="4.3" fill="#fff" stroke="#666" stroke-width="1.1"/><rect x="4" y="1" width="9" height="10" fill="#fff" stroke="#666" stroke-width="1.1"/><path d="M6 4.5h5M6 7h5" stroke="#666"/></svg>
<svg style="position:absolute;left:160.5px;top:27.9px" width="14.0" height="13.0" viewBox="0 0 14 13"><path d="M0.8 0.8 H6.5 L8.5 2.8 V12.3 H0.8Z" fill="#fff" stroke="#666" stroke-width="1.1"/><rect x="2.5" y="5" width="4.5" height="4" fill="#777"/><path d="M9 7 L13 11 M13 7 L9 11" stroke="#555" stroke-width="1.1"/></svg>
<svg style="position:absolute;left:183.5px;top:27.9px" width="12.0" height="13.0" viewBox="0 0 12 13"><path d="M0.8 2.5 L2.8 0.8 H11 V12.3 H0.8Z" fill="#fff" stroke="#666" stroke-width="1.1"/><path d="M3 3.5 H9 M6 3.5 V11" stroke="#2a9fd8" stroke-width="1.4"/></svg>
<svg style="position:absolute;left:204.6px;top:27.9px" width="14.0" height="13.0" viewBox="0 0 14 13"><path d="M0.8 0.8 H7 L9 2.8 V9.5 H0.8Z" fill="#fff" stroke="#666" stroke-width="1.1"/><path d="M4 3.5 H11 L13 5.5 V12.3 H4Z" fill="#fff" stroke="#666" stroke-width="1.1"/><path d="M2 8 H7 V6 L10 8.5 L7 11 V9.5 H2Z" fill="#13893e"/></svg>
<svg style="position:absolute;left:226.8px;top:27.9px" width="13.0" height="13.0" viewBox="0 0 13 13"><path d="M0.5 0.8 H12.5 V3 H0.5Z" fill="#666"/><rect x="3" y="3" width="7" height="9.5" fill="#666"/><path d="M4.5 4.5 L7 7.5 L4.5 10.5" stroke="#eee" fill="none" stroke-width="1"/></svg>
<div style="left:248.9px;top:27.4px;font-size:6.5px;color:#e8a818;font-weight:400;font-family:'Liberation Sans';white-space:pre;">A</div>
<div style="left:253.1px;top:30.9px;font-size:6.5px;color:#d8262b;font-weight:400;font-family:'Liberation Sans';white-space:pre;">B</div>
<div style="left:257.4px;top:34.9px;font-size:6.5px;color:#1f9a5c;font-weight:400;font-family:'Liberation Sans';white-space:pre;">C</div>
<svg style="position:absolute;left:276.4px;top:29.4px" width="13.0" height="11.0" viewBox="0 0 13 11"><rect x="0.5" y="0.5" width="12" height="10" fill="#fff" stroke="#666" stroke-width="1"/><rect x="0.5" y="0.5" width="12" height="2.5" fill="#a3362a"/><rect x="1" y="1" width="4" height="1.5" fill="#e8a818"/><path d="M0.5 5.5h12M0.5 8h12M4.5 3v7.5M8.5 3v7.5" stroke="#666" stroke-width="0.8"/></svg>
<svg style="position:absolute;left:298.5px;top:28.5px" width="13.0" height="12.0" viewBox="0 0 13 12"><path d="M5 1 H12.5 M5 4 H12.5 M5 7.5 H12.5 M5 11 H12.5 M7.5 1 V11 M12.5 1 V11" stroke="#666" stroke-width="0.9"/><path d="M0.3 3.5 H5 L7 5.5 L5 7.5 H0.3Z" fill="#f0b020"/></svg>
<svg style="position:absolute;left:320.5px;top:27.9px" width="15.0" height="13.0" viewBox="0 0 15 13"><path d="M6 1 H13 M6 1 V3.5 H13" stroke="#666" stroke-width="0.9" fill="none"/><path d="M0.3 3.5 H4.5 L6.5 5.5 L4.5 7.5 H0.3Z" fill="#f0b020"/><path d="M5 9 H8" stroke="#666" stroke-width="1"/><rect x="8.5" y="8" width="5.5" height="4.5" fill="#666"/></svg>
<svg style="position:absolute;left:348.1px;top:27.9px" width="13.8" height="13.0" viewBox="0 0 13.8 13"><rect x="0.6" y="0.6" width="12.600000000000001" height="11.8" fill="#fff" stroke="#8a8a8a" stroke-width="1.1"/><circle cx="8.28" cy="3.25" r="1" fill="#1e9ad6"/><path d="M7.590000000000001 5.46 L5.796 11.049999999999999" stroke="#1e9ad6" stroke-width="1.5"/></svg>
<svg style="position:absolute;left:371.0px;top:27.5px" width="14.0" height="13.0" viewBox="0 0 14 13"><rect x="0.5" y="4.5" width="6.5" height="7" fill="#f0b020"/><rect x="6" y="6.5" width="6.5" height="6.5" fill="#606060"/><path d="M7.5 4.5 C7.5 1.5 10 1.5 10.5 3" stroke="#13893e" fill="none" stroke-width="1.4"/><path d="M8.8 2.6 L12 2.8 L10.6 5.5Z" fill="#13893e"/></svg>
<svg style="position:absolute;left:450.4px;top:28.0px" width="14.0" height="13.0" viewBox="0 0 14 13"><rect x="0.5" y="0.5" width="5.5" height="6" fill="#1f7a45"/><rect x="7" y="0.5" width="6" height="3.5" fill="#1f7a45"/><rect x="7" y="4.5" width="6" height="4" fill="#c8262b"/><rect x="7" y="9" width="6" height="3.5" fill="#fff" stroke="#777" stroke-width="0.8"/><path d="M1 7.5 H5 M1 9.5 L5 12" stroke="#777" stroke-width="0.8" fill="none"/></svg>
<svg style="position:absolute;left:-0.4px;top:167.5px" width="38.6" height="14.0" viewBox="0 0 38.599999999999994 14"><path d="M0.8 4 V0.8 H4 M34.599999999999994 0.8 H37.8 V4 M37.8 10 V13.2 H34.599999999999994 M4 13.2 H0.8 V10" fill="none" stroke="#c8323a" stroke-width="1.6"/></svg>
<svg style="position:absolute;left:32.5px;top:150.5px" width="4.0" height="3.0" viewBox="0 0 4 3"><path d="M0 3 L2 0 L4 3Z" fill="#d0303a"/></svg>
</div>
<div style="left:755.0px;top:553.0px;width:541.0px;height:216.0px;overflow:hidden;border:1px solid #848b9a;box-sizing:border-box;background:linear-gradient(180deg,#fdfefe 0%,#f6f9fb 60%,#eef3f7 100%)">
<div style="left:-0.5px;top:-0.7px;width:540.1px;height:24.3px;background:#f9f9f9;border-bottom:1px solid #e8e8e8;box-sizing:border-box"></div>
<div style="left:-0.5px;top:23.6px;width:540.1px;height:22.0px;background:#f5f5f5"></div>
<svg style="position:absolute;left:9.0px;top:4.3px" width="27.0" height="14.0" viewBox="0 0 27 14"><rect x="0.5" y="0.5" width="26" height="13" fill="#f7f7f7" stroke="#b5b5b5" stroke-width="1"/><path d="M2.5 2.5 H7.5 L5.5 5 V6.5" stroke="#777" fill="none" stroke-width="0.9"/><rect x="8" y="5" width="3" height="4" fill="#fff" stroke="#555" stroke-width="1"/><path d="M22.5 10.5 L24.5 8.5 V10.5Z" fill="#333"/></svg>
<div style="left:47.4px;top:4.6px;font-size:14.2px;color:#595959;font-weight:400;font-family:'Liberation Sans';white-space:pre;letter-spacing:0.12px">Display Document: Data Entry View</div>
<div style="left:105.1px;top:27.3px;font-size:11.7px;color:#6a6a6a;font-weight:400;font-family:'Liberation Sans';white-space:pre;letter-spacing:0.05px">Display Currency</div>
<div style="left:231.7px;top:27.3px;font-size:11.7px;color:#6a6a6a;font-weight:400;font-family:'Liberation Sans';white-space:pre;letter-spacing:0.05px">General Ledger View</div>
<div style="left:5.8px;top:50.0px;width:467.4px;height:87.7px;background:rgba(255,255,255,0.6);border:1px solid #eceff2;box-sizing:border-box"></div>
<div style="left:5.8px;top:50.0px;width:467.4px;height:12.8px;background:#fff"></div>
<div style="left:5.8px;top:62.2px;width:467.4px;height:1.0px;background:#4aa8cc"></div>
<div style="left:10.0px;top:50.7px;font-size:10px;color:#1e1e1e;font-weight:400;font-family:'Liberation Sans';white-space:pre;">Data Entry View</div>
<div style="left:6.0px;top:79.6px;width:91.2px;height:1.0px;background:#d9dde2"></div>
<div style="left:10.7px;top:68.2px;font-size:9.9px;color:#1e1e1e;font-weight:400;font-family:'Liberation Sans';white-space:pre;">Document Number</div>
<div style="left:97.2px;top:66.6px;width:59.2px;height:14.0px;background:#e6e6e6;border:1px solid #d6d6d6;box-sizing:border-box"></div>
<div style="left:99.5px;top:67.2px;font-size:11.2px;color:#222;font-weight:400;font-family:'Liberation Sans';white-space:pre;transform:scaleX(0.85);transform-origin:0 0">100000250</div>
<div style="left:6.0px;top:95.1px;width:91.2px;height:1.0px;background:#d9dde2"></div>
<div style="left:10.7px;top:83.7px;font-size:9.9px;color:#1e1e1e;font-weight:400;font-family:'Liberation Sans';white-space:pre;">Document Date</div>
<div style="left:97.2px;top:82.1px;width:59.2px;height:14.0px;background:#e6e6e6;border:1px solid #d6d6d6;box-sizing:border-box"></div>
<div style="left:99.5px;top:82.7px;font-size:11.2px;color:#222;font-weight:400;font-family:'Liberation Sans';white-space:pre;transform:scaleX(0.85);transform-origin:0 0">06. 08. 2020</div>
<div style="left:6.0px;top:110.6px;width:91.2px;height:1.0px;background:#d9dde2"></div>
<div style="left:10.7px;top:99.2px;font-size:9.9px;color:#1e1e1e;font-weight:400;font-family:'Liberation Sans';white-space:pre;">Reference</div>
<div style="left:97.2px;top:97.6px;width:86.8px;height:14.0px;background:#e6e6e6;border:1px solid #d6d6d6;box-sizing:border-box"></div>
<div style="left:6.0px;top:126.1px;width:91.2px;height:1.0px;background:#d9dde2"></div>
<div style="left:10.7px;top:114.7px;font-size:9.9px;color:#1e1e1e;font-weight:400;font-family:'Liberation Sans';white-space:pre;">Currency</div>
<div style="left:97.2px;top:113.1px;width:31.8px;height:14.0px;background:#e6e6e6;border:1px solid #d6d6d6;box-sizing:border-box"></div>
<div style="left:99.5px;top:113.7px;font-size:11.2px;color:#222;font-weight:400;font-family:'Liberation Sans';white-space:pre;transform:scaleX(0.85);transform-origin:0 0">USD</div>
<div style="left:189.0px;top:79.6px;width:88.3px;height:1.0px;background:#d9dde2"></div>
<div style="left:191.7px;top:68.2px;font-size:9.9px;color:#1e1e1e;font-weight:400;font-family:'Liberation Sans';white-space:pre;">Company Code</div>
<div style="left:277.3px;top:66.6px;width:27.2px;height:14.0px;background:#e6e6e6;border:1px solid #d6d6d6;box-sizing:border-box"></div>
<div style="left:279.5px;top:67.2px;font-size:11.2px;color:#222;font-weight:400;font-family:'Liberation Sans';white-space:pre;transform:scaleX(0.85);transform-origin:0 0">1510</div>
<div style="left:189.0px;top:95.1px;width:88.3px;height:1.0px;background:#d9dde2"></div>
<div style="left:191.7px;top:83.7px;font-size:9.9px;color:#1e1e1e;font-weight:400;font-family:'Liberation Sans';white-space:pre;">Posting Date</div>
<div style="left:277.3px;top:82.1px;width:59.8px;height:14.0px;background:#e6e6e6;border:1px solid #d6d6d6;box-sizing:border-box"></div>
<div style="left:279.5px;top:82.7px;font-size:11.2px;color:#222;font-weight:400;font-family:'Liberation Sans';white-space:pre;transform:scaleX(0.85);transform-origin:0 0">06. 08. 2020</div>
<div style="left:189.0px;top:110.6px;width:88.3px;height:1.0px;background:#d9dde2"></div>
<div style="left:191.7px;top:99.2px;font-size:9.9px;color:#1e1e1e;font-weight:400;font-family:'Liberation Sans';white-space:pre;">Cross-Comp.No.</div>
<div style="left:277.3px;top:97.6px;width:92.5px;height:14.0px;background:#e6e6e6;border:1px solid #d6d6d6;box-sizing:border-box"></div>
<div style="left:189.0px;top:126.1px;width:88.3px;height:1.0px;background:#d9dde2"></div>
<div style="left:191.7px;top:114.7px;font-size:9.9px;color:#9a9a9a;font-weight:400;font-family:'Liberation Sans';white-space:pre;">Texts Exist</div>
<div style="left:279.0px;top:116.7px;width:8.2px;height:8.1px;border:1px solid #bbb;background:#eee;box-sizing:border-box"></div>
<div style="left:347.0px;top:79.6px;width:89.2px;height:1.0px;background:#d9dde2"></div>
<div style="left:349.9px;top:68.2px;font-size:9.9px;color:#1e1e1e;font-weight:400;font-family:'Liberation Sans';white-space:pre;">Fiscal Year</div>
<div style="left:436.2px;top:66.6px;width:26.6px;height:14.0px;background:#e6e6e6;border:1px solid #d6d6d6;box-sizing:border-box"></div>
<div style="left:438.5px;top:67.2px;font-size:11.2px;color:#222;font-weight:400;font-family:'Liberation Sans';white-space:pre;transform:scaleX(0.85);transform-origin:0 0">2020</div>
<div style="left:347.0px;top:95.1px;width:89.2px;height:1.0px;background:#d9dde2"></div>
<div style="left:349.9px;top:83.7px;font-size:9.9px;color:#1e1e1e;font-weight:400;font-family:'Liberation Sans';white-space:pre;">Period</div>
<div style="left:436.2px;top:82.1px;width:15.5px;height:14.0px;background:#e6e6e6;border:1px solid #d6d6d6;box-sizing:border-box"></div>
<div style="left:438.5px;top:82.7px;font-size:11.2px;color:#222;font-weight:400;font-family:'Liberation Sans';white-space:pre;transform:scaleX(0.85);transform-origin:0 0">8</div>
<div style="left:347.0px;top:126.1px;width:89.2px;height:1.0px;background:#d9dde2"></div>
<div style="left:349.9px;top:114.7px;font-size:9.9px;color:#1e1e1e;font-weight:400;font-family:'Liberation Sans';white-space:pre;">Ledger Group</div>
<div style="left:436.2px;top:113.1px;width:26.6px;height:14.0px;background:#e6e6e6;border:1px solid #d6d6d6;box-sizing:border-box"></div>
<div style="left:-0.5px;top:141.0px;width:540.1px;height:17.3px;background:#f5f5f5"></div>
<div style="left:2.3px;top:158.3px;width:536.3px;height:16.0px;background:#e9e9e9"></div>
<div style="left:2.3px;top:174.3px;width:536.3px;height:24.1px;background:#cfe1ed"></div>
<div style="left:2.3px;top:186.3px;width:536.3px;height:0.7px;background:#b9c6d0"></div>
<div style="left:3.5px;top:198.4px;width:535.5px;height:12.0px;background:#fff23c"></div>
<div style="left:36.7px;top:158.3px;width:0.8px;height:40.1px;background:#c8c8c8"></div>
<div style="left:63.0px;top:158.3px;width:0.8px;height:40.1px;background:#c8c8c8"></div>
<div style="left:96.6px;top:158.3px;width:0.8px;height:40.1px;background:#c8c8c8"></div>
<div style="left:152.2px;top:158.3px;width:0.8px;height:40.1px;background:#c8c8c8"></div>
<div style="left:268.0px;top:158.3px;width:0.8px;height:40.1px;background:#c8c8c8"></div>
<div style="left:329.3px;top:158.3px;width:0.8px;height:40.1px;background:#c8c8c8"></div>
<div style="left:446.6px;top:158.3px;width:0.8px;height:40.1px;background:#c8c8c8"></div>
<div style="left:3.6px;top:161.6px;font-size:10.4px;color:#222;font-weight:400;font-family:'Liberation Sans';white-space:pre;">CoCd</div>
<div style="left:64.5px;top:161.6px;font-size:10.4px;color:#222;font-weight:400;font-family:'Liberation Sans';white-space:pre;">Key</div>
<div style="left:85.5px;top:161.6px;font-size:10.4px;color:#222;font-weight:400;font-family:'Liberation Sans';white-space:pre;">S</div>
<div style="left:98.7px;top:161.6px;font-size:10.4px;color:#222;font-weight:400;font-family:'Liberation Sans';white-space:pre;">G/L Acc</div>
<div style="left:153.9px;top:161.6px;font-size:10.4px;color:#222;font-weight:400;font-family:'Liberation Sans';white-space:pre;">G/L Account Name</div>
<div style="left:270.2px;top:161.6px;font-size:10.4px;color:#222;font-weight:400;font-family:'Liberation Sans';white-space:pre;">Account</div>
<div style="left:331.5px;top:161.6px;font-size:10.4px;color:#222;font-weight:400;font-family:'Liberation Sans';white-space:pre;">Description</div>
<div style="left:508.6px;top:161.6px;font-size:10.4px;color:#222;font-weight:400;font-family:'Liberation Sans';white-space:pre;">Curr.</div>
<div style="left:-238.0px;width:300px;text-align:right;top:161.6px;font-size:10.4px;color:#222;font-weight:400;font-family:'Liberation Sans';white-space:pre;">Item</div>
<div style="left:205.3px;width:300px;text-align:right;top:161.6px;font-size:10.4px;color:#222;font-weight:400;font-family:'Liberation Sans';white-space:pre;">Amount</div>
<div style="left:3.6px;top:174.4px;font-size:10.4px;color:#222;font-weight:400;font-family:'Liberation Sans';white-space:pre;">1510</div>
<div style="left:-239.7px;width:300px;text-align:right;top:174.4px;font-size:10.4px;color:#222;font-weight:400;font-family:'Liberation Sans';white-space:pre;">1</div>
<div style="left:65.0px;top:174.4px;font-size:10.4px;color:#222;font-weight:400;font-family:'Liberation Sans';white-space:pre;">40</div>
<div style="left:98.7px;top:174.4px;font-size:10.4px;color:#222;font-weight:400;font-family:'Liberation Sans';white-space:pre;">63005000</div>
<div style="left:153.9px;top:174.4px;font-size:10.4px;color:#222;font-weight:400;font-family:'Liberation Sans';white-space:pre;">Office/Building Rent</div>
<div style="left:270.2px;top:174.4px;font-size:10.4px;color:#222;font-weight:400;font-family:'Liberation Sans';white-space:pre;">63005000</div>
<div style="left:331.5px;top:174.4px;font-size:10.4px;color:#222;font-weight:400;font-family:'Liberation Sans';white-space:pre;">Office/Building Rent</div>
<div style="left:200.9px;width:300px;text-align:right;top:174.4px;font-size:10.4px;color:#222;font-weight:400;font-family:'Liberation Sans';white-space:pre;">1.000,00</div>
<div style="left:508.6px;top:174.4px;font-size:10.4px;color:#222;font-weight:400;font-family:'Liberation Sans';white-space:pre;">USD</div>
<div style="left:-239.7px;width:300px;text-align:right;top:186.2px;font-size:10.4px;color:#222;font-weight:400;font-family:'Liberation Sans';white-space:pre;">2</div>
<div style="left:65.0px;top:186.2px;font-size:10.4px;color:#222;font-weight:400;font-family:'Liberation Sans';white-space:pre;">50</div>
<div style="left:98.7px;top:186.2px;font-size:10.4px;color:#222;font-weight:400;font-family:'Liberation Sans';white-space:pre;">65009000</div>
<div style="left:153.9px;top:186.2px;font-size:10.4px;color:#222;font-weight:400;font-family:'Liberation Sans';white-space:pre;">Other activity costs</div>
<div style="left:270.2px;top:186.2px;font-size:10.4px;color:#222;font-weight:400;font-family:'Liberation Sans';white-space:pre;">65009000</div>
<div style="left:331.5px;top:186.2px;font-size:10.4px;color:#222;font-weight:400;font-family:'Liberation Sans';white-space:pre;">Other activity costs</div>
<div style="left:204.2px;width:300px;text-align:right;top:186.2px;font-size:10.4px;color:#222;font-weight:400;font-family:'Liberation Sans';white-space:pre;">1.000,00-</div>
<div style="left:508.6px;top:186.2px;font-size:10.4px;color:#222;font-weight:400;font-family:'Liberation Sans';white-space:pre;">USD</div>
<div style="left:201.3px;width:300px;text-align:right;top:198.3px;font-size:10.4px;color:#222;font-weight:700;font-family:'Liberation Sans';white-space:pre;">0,00</div>
<div style="left:508.6px;top:198.3px;font-size:10.4px;color:#222;font-weight:700;font-family:'Liberation Sans';white-space:pre;">USD</div>
<svg style="position:absolute;left:9.6px;top:27.5px" width="12.0" height="13.0" viewBox="0 0 12 13"><circle cx="3" cy="5" r="2.4" fill="none" stroke="#555" stroke-width="1"/><circle cx="8.5" cy="5" r="2.4" fill="none" stroke="#555" stroke-width="1"/><path d="M1 3 L3 0.8 M10 0.8 L11.5 3.5" stroke="#555" stroke-width="0.9"/><path d="M3.5 12 L10.5 8" stroke="#555" stroke-width="1.5"/></svg>
<svg style="position:absolute;left:28.5px;top:26.8px" width="14.0" height="13.0" viewBox="0 0 14 13"><rect x="0.5" y="4.5" width="6.5" height="7" fill="#f0b020"/><rect x="6" y="6.5" width="6.5" height="6.5" fill="#606060"/><path d="M7.5 4.5 C7.5 1.5 10 1.5 10.5 3" stroke="#13893e" fill="none" stroke-width="1.4"/><path d="M8.8 2.6 L12 2.8 L10.6 5.5Z" fill="#13893e"/></svg>
<svg style="position:absolute;left:49.5px;top:27.3px" width="13.0" height="13.0" viewBox="0 0 13 13"><g transform="scale(1.0)"><path d="M4 1.5H11.5V12H3.5V9" fill="#fff" stroke="#5e5e5e" stroke-width="1.2"/><path d="M8 4h3M8 6.5h3" stroke="#1f8a4c" stroke-width="1.2"/><circle cx="4.5" cy="4.8" r="3.3" fill="#dff5ec" stroke="#5e5e5e" stroke-width="1.2"/><path d="M2.2 4.8h4.6" stroke="#1f7a45" stroke-width="1.8"/><path d="M6.5 7.2 L10.8 11.6" stroke="#5e5e5e" stroke-width="1.5"/></g></svg>
<svg style="position:absolute;left:69.5px;top:29.5px" width="13.0" height="9.0" viewBox="0 0 13 9"><path d="M3 5.5 C3 -0.5 10 -0.5 10 5.5Z" fill="#505050"/><path d="M3 4.6 H10 V5.8 H3Z" fill="#b53a3a"/><path d="M0.5 5.5 C3 8.3 10 8.3 12.5 5.5 C10 6.8 3 6.8 0.5 5.5Z" fill="#8a3535" stroke="#8a3535" stroke-width="0.8"/></svg>
<svg style="position:absolute;left:89.3px;top:27.5px" width="13.0" height="12.0" viewBox="0 0 13 12"><path d="M3 0.5v3" stroke="#444" stroke-width="1.6"/><path d="M1.2 2.5 L3 4.8 L4.8 2.5Z" fill="#444"/><path d="M9.5 0.5v3" stroke="#444" stroke-width="1.6"/><path d="M7.7 2.5 L9.5 4.8 L11.3 2.5Z" fill="#444"/><rect x="0.5" y="6" width="5" height="5.6" fill="#e9b21b" stroke="#9a7a10" stroke-width="0.6"/><rect x="7" y="6" width="5" height="5.6" fill="#d8262b" stroke="#8a2020" stroke-width="0.6"/></svg>
<svg style="position:absolute;left:216.0px;top:27.0px" width="13.0" height="12.0" viewBox="0 0 13 12"><rect x="3" y="0.8" width="9" height="10.5" fill="#fff" stroke="#666" stroke-width="1"/><path d="M5 3h5M5 5.5h5M5 8h5" stroke="#666" stroke-width="0.8"/><rect x="0.5" y="2" width="4" height="3" fill="#e8b020"/><path d="M9 3 V11" stroke="#444" stroke-width="1.2"/></svg>
<div style="left:2.9px;top:145.2px;width:14.3px;height:12.6px;background:linear-gradient(#fbfbfb,#ececec);border:1px solid #d2d2d2;box-sizing:border-box;border-radius:1px"></div>
<div style="left:22.0px;top:145.2px;width:15.2px;height:12.6px;background:linear-gradient(#fbfbfb,#ececec);border:1px solid #d2d2d2;box-sizing:border-box;border-radius:1px"></div>
<div style="left:38.2px;top:145.2px;width:13.3px;height:12.6px;background:linear-gradient(#fbfbfb,#ececec);border:1px solid #d2d2d2;box-sizing:border-box;border-radius:1px"></div>
<div style="left:53.4px;top:145.2px;width:13.4px;height:12.6px;background:linear-gradient(#fbfbfb,#ececec);border:1px solid #d2d2d2;box-sizing:border-box;border-radius:1px"></div>
<div style="left:67.7px;top:145.2px;width:14.4px;height:12.6px;background:linear-gradient(#fbfbfb,#ececec);border:1px solid #d2d2d2;box-sizing:border-box;border-radius:1px"></div>
<div style="left:84.0px;top:145.2px;width:18.1px;height:12.6px;background:linear-gradient(#fbfbfb,#ececec);border:1px solid #d2d2d2;box-sizing:border-box;border-radius:1px"></div>
<div style="left:107.8px;top:145.2px;width:18.2px;height:12.6px;background:linear-gradient(#fbfbfb,#ececec);border:1px solid #d2d2d2;box-sizing:border-box;border-radius:1px"></div>
<div style="left:127.9px;top:145.2px;width:18.1px;height:12.6px;background:linear-gradient(#fbfbfb,#ececec);border:1px solid #d2d2d2;box-sizing:border-box;border-radius:1px"></div>
<div style="left:151.7px;top:145.2px;width:13.4px;height:12.6px;background:linear-gradient(#fbfbfb,#ececec);border:1px solid #d2d2d2;box-sizing:border-box;border-radius:1px"></div>
<div style="left:167.0px;top:145.2px;width:16.2px;height:12.6px;background:linear-gradient(#fbfbfb,#ececec);border:1px solid #d2d2d2;box-sizing:border-box;border-radius:1px"></div>
<div style="left:184.2px;top:145.2px;width:16.2px;height:12.6px;background:linear-gradient(#fbfbfb,#ececec);border:1px solid #d2d2d2;box-sizing:border-box;border-radius:1px"></div>
<div style="left:202.3px;top:145.2px;width:18.1px;height:12.6px;background:linear-gradient(#fbfbfb,#ececec);border:1px solid #d2d2d2;box-sizing:border-box;border-radius:1px"></div>
<div style="left:226.1px;top:145.2px;width:14.4px;height:12.6px;background:linear-gradient(#fbfbfb,#ececec);border:1px solid #d2d2d2;box-sizing:border-box;border-radius:1px"></div>
<div style="left:19.0px;top:147.0px;width:1.0px;height:9.0px;background:#cfcfcf"></div>
<div style="left:105.0px;top:147.0px;width:1.0px;height:9.0px;background:#cfcfcf"></div>
<div style="left:148.9px;top:147.0px;width:1.0px;height:9.0px;background:#cfcfcf"></div>
<div style="left:223.3px;top:147.0px;width:1.0px;height:9.0px;background:#cfcfcf"></div>
<svg style="position:absolute;left:5.4px;top:147.0px" width="9.4" height="9.4" viewBox="0 0 13 13"><g transform="scale(1.0)"><path d="M4 1.5H11.5V12H3.5V9" fill="#fff" stroke="#5e5e5e" stroke-width="1.2"/><path d="M8 4h3M8 6.5h3" stroke="#1f8a4c" stroke-width="1.2"/><circle cx="4.5" cy="4.8" r="3.3" fill="#dff5ec" stroke="#5e5e5e" stroke-width="1.2"/><path d="M2.2 4.8h4.6" stroke="#1f7a45" stroke-width="1.8"/><path d="M6.5 7.2 L10.8 11.6" stroke="#5e5e5e" stroke-width="1.5"/></g></svg>
<svg style="position:absolute;left:24.6px;top:147.5px" width="10.1" height="8.6" viewBox="0 0 14 12"><rect x="5" y="0.5" width="4" height="1.6" fill="#555"/><rect x="2.5" y="4.5" width="9" height="2" fill="#555"/><rect x="0" y="8.5" width="14" height="3" fill="#555"/></svg>
<svg style="position:absolute;left:39.8px;top:147.5px" width="10.1" height="8.6" viewBox="0 0 14 12"><rect x="0" y="0.5" width="14" height="3" fill="#555"/><rect x="2.5" y="5" width="9" height="2" fill="#555"/><rect x="5" y="9.5" width="4" height="1.8" fill="#555"/></svg>
<svg style="position:absolute;left:56.1px;top:147.5px" width="7.9" height="7.9" viewBox="0 0 11 11"><rect x="0.5" y="2" width="4" height="8.5" fill="#555"/><rect x="6.5" y="2" width="4" height="8.5" fill="#555"/><rect x="1" y="0.3" width="3" height="2" fill="#555"/><rect x="7" y="0.3" width="3" height="2" fill="#555"/><rect x="4" y="4" width="3" height="2.5" fill="#555"/></svg>
<svg style="position:absolute;left:70.9px;top:147.5px" width="7.9" height="7.9" viewBox="0 0 11 11"><rect x="0.5" y="2" width="4" height="8.5" fill="#c8c8c8"/><rect x="6.5" y="2" width="4" height="8.5" fill="#c8c8c8"/><rect x="1" y="0.3" width="3" height="2" fill="#c8c8c8"/><rect x="7" y="0.3" width="3" height="2" fill="#c8c8c8"/><rect x="4" y="4" width="3" height="2.5" fill="#c8c8c8"/></svg>
<svg style="position:absolute;left:86.5px;top:147.0px" width="10.1" height="9.4" viewBox="0 0 14 13"><path d="M0.5 0.5 H13 L8 6 V12.5 H5.5 V6Z" fill="#555"/><circle cx="10" cy="6.2" r="2.2" fill="#fff" stroke="#777" stroke-width="0.8"/></svg>
<svg style="position:absolute;left:97.5px;top:153.0px" width="2.9" height="2.9" viewBox="0 0 4 4"><path d="M0 4 L4 0 V4Z" fill="#222"/></svg>
<svg style="position:absolute;left:111.5px;top:147.3px" width="5.8" height="8.6" viewBox="0 0 8 12"><path d="M7.5 1 H0.8 L4.2 6 L0.8 11 H7.5" fill="none" stroke="#1f8a4c" stroke-width="1"/></svg>
<svg style="position:absolute;left:121.5px;top:153.0px" width="2.9" height="2.9" viewBox="0 0 4 4"><path d="M0 4 L4 0 V4Z" fill="#222"/></svg>
<svg style="position:absolute;left:131.0px;top:147.3px" width="7.9" height="7.9" viewBox="0 0 11 11"><path d="M1 1 L2.5 0.5 V5" stroke="#666" fill="none" stroke-width="0.9"/><path d="M1 10.5 L9 0.5" stroke="#666" stroke-width="0.9"/><path d="M7 6.5 H9 L7 10.5 H9.5" stroke="#666" fill="none" stroke-width="0.9"/></svg>
<svg style="position:absolute;left:141.0px;top:153.0px" width="2.9" height="2.9" viewBox="0 0 4 4"><path d="M0 4 L4 0 V4Z" fill="#222"/></svg>
<svg style="position:absolute;left:153.4px;top:147.3px" width="10.1" height="8.6" viewBox="0 0 14 12"><rect x="3" y="0.5" width="8" height="3" fill="#fff" stroke="#555" stroke-width="0.9"/><rect x="0.5" y="3.5" width="13" height="5" fill="#555"/><rect x="3" y="7.5" width="8" height="4" fill="#fff" stroke="#555" stroke-width="0.9"/><path d="M4.5 10h5" stroke="#2a9fd8" stroke-width="0.9"/></svg>
<svg style="position:absolute;left:169.0px;top:147.0px" width="10.1" height="9.4" viewBox="0 0 14 13"><circle cx="5" cy="8" r="4.3" fill="#fff" stroke="#666" stroke-width="1.1"/><rect x="4" y="1" width="9" height="10" fill="#fff" stroke="#666" stroke-width="1.1"/><path d="M6 4.5h5M6 7h5" stroke="#666"/></svg>
<svg style="position:absolute;left:179.0px;top:153.0px" width="2.9" height="2.9" viewBox="0 0 4 4"><path d="M0 4 L4 0 V4Z" fill="#222"/></svg>
<svg style="position:absolute;left:186.0px;top:147.3px" width="10.1" height="8.6" viewBox="0 0 14 12"><path d="M0.8 0.8 H6 L8 2.8 V10 H0.8Z" fill="#fff" stroke="#666" stroke-width="1"/><path d="M4 3.5 H10 L12 5.5 V11.3 H4Z" fill="#fff" stroke="#666" stroke-width="1"/><path d="M2 7 H6 V5.5 L9 7.5 L6 9.5 V8.5 H2Z" fill="#13893e"/></svg>
<svg style="position:absolute;left:196.0px;top:153.0px" width="2.9" height="2.9" viewBox="0 0 4 4"><path d="M0 4 L4 0 V4Z" fill="#222"/></svg>
<svg style="position:absolute;left:204.5px;top:147.3px" width="9.4" height="8.6" viewBox="0 0 13 12"><path d="M5 1 H12.5 M5 4 H12.5 M5 7.5 H12.5 M5 11 H12.5 M7.5 1 V11 M12.5 1 V11" stroke="#666" stroke-width="0.9"/><path d="M0.3 3.5 H5 L7 5.5 L5 7.5 H0.3Z" fill="#f0b020"/></svg>
<svg style="position:absolute;left:215.5px;top:153.0px" width="2.9" height="2.9" viewBox="0 0 4 4"><path d="M0 4 L4 0 V4Z" fill="#222"/></svg>
<svg style="position:absolute;left:229.3px;top:146.8px" width="7.9" height="8.6" viewBox="0 0 11 12"><rect x="0.6" y="0.6" width="9.8" height="10.8" fill="#fff" stroke="#8a8a8a" stroke-width="1.1"/><circle cx="6.6" cy="3.0" r="1" fill="#1e9ad6"/><path d="M6.050000000000001 5.04 L4.62 10.2" stroke="#1e9ad6" stroke-width="1.5"/></svg>
<svg style="position:absolute;left:2.0px;top:174.0px" width="35.2" height="12.7" viewBox="0 0 35.200000000000045 12.700000000000045"><path d="M0.8 4 V0.8 H4 M31.200000000000045 0.8 H34.40000000000005 V4 M34.40000000000005 8.700000000000045 V11.900000000000045 H31.200000000000045 M4 11.900000000000045 H0.8 V8.700000000000045" fill="none" stroke="#c8323a" stroke-width="1.6"/></svg>
<svg style="position:absolute;left:32.0px;top:159.5px" width="4.0" height="3.0" viewBox="0 0 4 3"><path d="M0 3 L2 0 L4 3Z" fill="#d0303a"/></svg>
<div style="left:448.5px;top:165.0px;width:1.0px;height:1.0px;background:#555"></div>
<div style="left:448.5px;top:167.0px;width:1.0px;height:1.0px;background:#555"></div>
<div style="left:448.5px;top:205.0px;width:1.5px;height:1.5px;background:#444"></div>
</div>
<svg style="position:absolute;left:0;top:0" width="1310" height="799"><polygon fill="#8193b2" points="48.1,452.8 88.0,467.0 91.0,458.0 103.0,482.4 77.8,494.1 80.8,485.1 41.6,470.4"/></svg>
<svg style="position:absolute;left:0;top:0" width="1310" height="799"><polygon fill="#8193b2" points="448.1,204.8 488.0,219.0 491.0,210.0 503.0,234.4 477.8,246.5 480.8,237.1 441.6,222.4"/></svg>
<svg style="position:absolute;left:0;top:0" width="1310" height="799"><polygon fill="#8193b2" points="696.2,545.0 736.0,558.9 739.4,549.9 751.0,574.3 726.2,586.3 729.2,577.3 690.1,562.7"/></svg>
</div></body></html>
